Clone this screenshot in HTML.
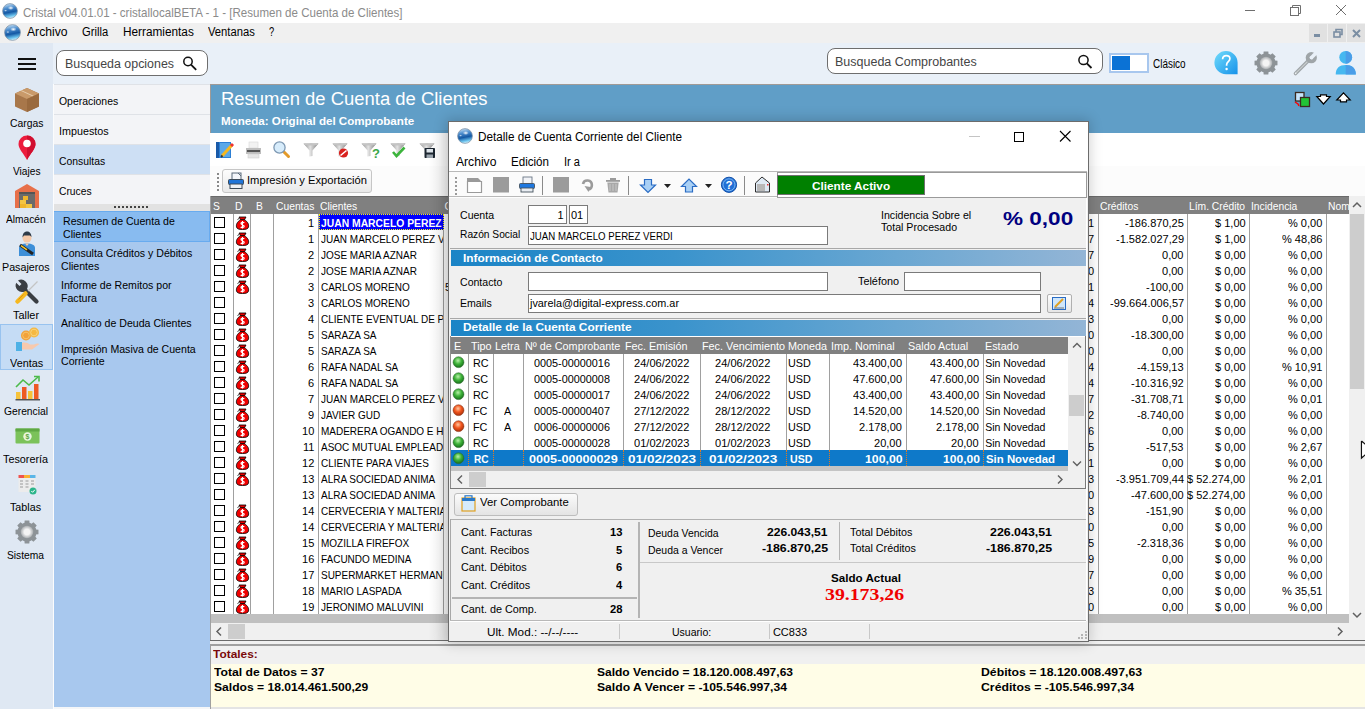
<!DOCTYPE html>
<html><head><meta charset="utf-8">
<style>
*{margin:0;padding:0;box-sizing:border-box}
html,body{width:1365px;height:709px;overflow:hidden;background:#fff;font-family:"Liberation Sans",sans-serif;font-size:12px;color:#000;position:relative}
.a{position:absolute}
.t{position:absolute;white-space:nowrap;line-height:1;transform-origin:0 0}
svg.a{overflow:visible}
</style></head><body>
<div class="a" style="left:0px;top:0px;width:1365px;height:23px;background:#fff;"></div>
<svg class="a" style="left:2px;top:3px;" width="16" height="16" viewBox="0 0 16 16"><defs><linearGradient id="g1" x1="0.3" y1="0" x2="0.5" y2="1"><stop offset="0" stop-color="#c9e3f7"/><stop offset="0.3" stop-color="#4f8fcf"/><stop offset="0.6" stop-color="#1458a4"/><stop offset="0.85" stop-color="#6cc4ee"/><stop offset="1" stop-color="#d8f4ff"/></linearGradient>
<radialGradient id="g1h" cx="0.5" cy="0.5" r="0.5"><stop offset="0" stop-color="#fff" stop-opacity="1"/><stop offset="1" stop-color="#fff" stop-opacity="0"/></radialGradient></defs>
<circle cx="8.0" cy="8.0" r="7.4" fill="url(#g1)" stroke="#7d8ea0" stroke-width="0.7"/>
<ellipse cx="8.8" cy="4.96" rx="3.04" ry="2.0" fill="url(#g1h)"/><ellipse cx="3.6" cy="7.6" rx="1.6" ry="1.2" fill="url(#g1h)" opacity="0.7"/></svg>
<div class="t" style="left:23.00px;top:6.00px;font-size:13px;color:#8b8b8b;transform:scaleX(0.8877);">Cristal v04.01.01 - cristallocalBETA - 1 - [Resumen de Cuenta de Clientes]</div>
<div class="a" style="left:1245px;top:10px;width:10px;height:1px;background:#6f6f6f;"></div>
<svg class="a" style="left:1289px;top:4px;" width="13" height="13" viewBox="0 0 13 13"><rect x="1.5" y="3.5" width="8" height="8" fill="none" stroke="#6f6f6f" stroke-width="1"/><path d="M3.5 3.5V1.5H11.5V9.5H9.5" fill="none" stroke="#6f6f6f" stroke-width="1"/></svg>
<svg class="a" style="left:1335px;top:4px;" width="12" height="12" viewBox="0 0 12 12"><path d="M1 1L11 11M11 1L1 11" stroke="#6f6f6f" stroke-width="1"/></svg>
<div class="a" style="left:0px;top:23px;width:1365px;height:20px;background:#f0f0f0;"></div>
<svg class="a" style="left:4px;top:24px;" width="17" height="17" viewBox="0 0 17 17"><defs><linearGradient id="g2" x1="0.3" y1="0" x2="0.5" y2="1"><stop offset="0" stop-color="#c9e3f7"/><stop offset="0.3" stop-color="#4f8fcf"/><stop offset="0.6" stop-color="#1458a4"/><stop offset="0.85" stop-color="#6cc4ee"/><stop offset="1" stop-color="#d8f4ff"/></linearGradient>
<radialGradient id="g2h" cx="0.5" cy="0.5" r="0.5"><stop offset="0" stop-color="#fff" stop-opacity="1"/><stop offset="1" stop-color="#fff" stop-opacity="0"/></radialGradient></defs>
<circle cx="8.5" cy="8.5" r="7.9" fill="url(#g2)" stroke="#7d8ea0" stroke-width="0.7"/>
<ellipse cx="9.350000000000001" cy="5.27" rx="3.23" ry="2.125" fill="url(#g2h)"/><ellipse cx="3.825" cy="8.075" rx="1.7000000000000002" ry="1.275" fill="url(#g2h)" opacity="0.7"/></svg>
<div class="t" style="left:27.00px;top:26.14px;font-size:12px;color:#000;transform:scaleX(1.0146);">Archivo</div>
<div class="t" style="left:82.20px;top:26.14px;font-size:12px;color:#000;transform:scaleX(0.9321);">Grilla</div>
<div class="t" style="left:123.00px;top:26.14px;font-size:12px;color:#000;transform:scaleX(0.9830);">Herramientas</div>
<div class="t" style="left:208.00px;top:26.14px;font-size:12px;color:#000;transform:scaleX(0.9352);">Ventanas</div>
<div class="t" style="left:268.60px;top:26.14px;font-size:12px;color:#000;transform:scaleX(0.7792);">?</div>
<div class="a" style="left:1309px;top:24px;width:18px;height:18px;background:#e1e1e1;"></div>
<div class="a" style="left:1328px;top:24px;width:18px;height:18px;background:#e1e1e1;"></div>
<div class="a" style="left:1347px;top:24px;width:18px;height:18px;background:#e1e1e1;"></div>
<div class="a" style="left:1314px;top:34px;width:6px;height:3px;background:#7b8ea3;"></div>
<svg class="a" style="left:1333px;top:28px;" width="10" height="10" viewBox="0 0 10 10"><rect x="1" y="4" width="6" height="5" fill="none" stroke="#7b8ea3" stroke-width="1.6"/><path d="M3 4V1.5H9V6.5H7" fill="none" stroke="#7b8ea3" stroke-width="1.6"/></svg>
<svg class="a" style="left:1352px;top:29px;" width="9" height="9" viewBox="0 0 9 9"><path d="M1 1L8 8M8 1L1 8" stroke="#7b8ea3" stroke-width="2"/></svg>
<div class="a" style="left:0px;top:43px;width:1365px;height:41px;background:#e9f0f8;"></div>
<div class="a" style="left:0px;top:43px;width:53px;height:666px;background:#dfe8f3;"></div>
<div class="a" style="left:18px;top:58px;width:18px;height:2px;background:#111;"></div>
<div class="a" style="left:18px;top:63px;width:18px;height:2px;background:#111;"></div>
<div class="a" style="left:18px;top:68px;width:18px;height:2px;background:#111;"></div>
<div class="a" style="left:56px;top:50px;width:152px;height:26px;background:#fff;border:1px solid #6e6e6e;border-radius:8px"></div>
<div class="t" style="left:64.50px;top:57.54px;font-size:12px;color:#454545;transform:scaleX(1.0340);">Busqueda opciones</div>
<svg class="a" style="left:182px;top:56px;" width="16" height="16" viewBox="0 0 16 16"><circle cx="6" cy="5.5" r="4.2" fill="none" stroke="#111" stroke-width="1.5"/><path d="M9 8.6L14.2 13.8" stroke="#111" stroke-width="1.8"/></svg>
<div class="a" style="left:827px;top:48px;width:276px;height:26px;background:#fff;border:1px solid #6e6e6e;border-radius:8px"></div>
<div class="t" style="left:835.30px;top:55.84px;font-size:12px;color:#454545;transform:scaleX(1.0412);">Busqueda Comprobantes</div>
<svg class="a" style="left:1077px;top:54px;" width="16" height="16" viewBox="0 0 16 16"><circle cx="6.5" cy="6" r="4.6" fill="none" stroke="#111" stroke-width="1.5"/><path d="M9.8 9.4L14.5 14" stroke="#111" stroke-width="1.8"/></svg>
<div class="a" style="left:1109px;top:53px;width:40px;height:20px;background:#fff;border:2px solid #a8c7ee"></div>
<div class="a" style="left:1112px;top:56px;width:18px;height:14px;background:#0b72d5;"></div>
<div class="t" style="left:1153.40px;top:58.34px;font-size:12px;color:#000;transform:scaleX(0.8286);">Clásico</div>
<svg class="a" style="left:1213px;top:50px;" width="26" height="26" viewBox="0 0 26 26"><defs><linearGradient id="hg" x1="0" y1="0" x2="1" y2="1"><stop offset="0" stop-color="#72dcfb"/><stop offset="1" stop-color="#1692ea"/></linearGradient></defs>
<path d="M13 1A11.6 11.6 0 0 0 1.4 12.6A11.6 11.6 0 0 0 13 24.2H24.6V12.6A11.6 11.6 0 0 0 13 1Z" fill="url(#hg)"/>
<path d="M9.6 9.2C9.6 6.8 11.2 5.6 13.3 5.6C15.4 5.6 16.9 7 16.9 8.8C16.9 11.6 13.6 11.8 13.6 14.8V15.8" fill="none" stroke="#fff" stroke-width="1.7"/><circle cx="13.6" cy="19" r="1.2" fill="#fff"/></svg>
<svg class="a" style="left:1254px;top:51px;" width="24" height="24" viewBox="0 0 24 24"><defs><radialGradient id="gg1254" cx="0.5" cy="0.5" r="0.5"><stop offset="0.45" stop-color="#f4f4f4"/><stop offset="1" stop-color="#a9adb0"/></radialGradient></defs>
<polygon points="21.00,9.41 23.47,9.68 23.47,14.32 21.00,14.59 20.19,16.53 21.75,18.46 18.46,21.75 16.53,20.19 14.59,21.00 14.32,23.47 9.68,23.47 9.41,21.00 7.47,20.19 5.54,21.75 2.25,18.46 3.81,16.53 3.00,14.59 0.53,14.32 0.53,9.68 3.00,9.41 3.81,7.47 2.25,5.54 5.54,2.25 7.47,3.81 9.41,3.00 9.68,0.53 14.32,0.53 14.59,3.00 16.53,3.81 18.46,2.25 21.75,5.54 20.19,7.47" fill="#8d9397"/><circle cx="12.0" cy="12.0" r="9.36" fill="#8d9397"/><circle cx="12.0" cy="12.0" r="6.24" fill="url(#gg1254)"/></svg>
<svg class="a" style="left:1291px;top:50px;" width="30" height="28" viewBox="0 0 30 28"><path d="M4.5 23.5L17.5 10.5" stroke="#9fa5a8" stroke-width="3.6" stroke-linecap="round"/><path d="M4.8 23.2L17.2 10.8" stroke="#c9cecf" stroke-width="1.2"/>
<circle cx="20.3" cy="7.7" r="5.6" fill="#9fa5a8"/><path d="M19.6 8.4L25.5 2.5" stroke="#e9f0f8" stroke-width="3.6"/><circle cx="20.3" cy="7.7" r="1.6" fill="#e9f0f8"/><circle cx="4.6" cy="23.4" r="0.8" fill="#eef2f6"/></svg>
<svg class="a" style="left:1333px;top:50px;" width="26" height="26" viewBox="0 0 26 26"><circle cx="12.7" cy="7.3" r="6.4" fill="#46b8f0"/><path d="M12.7 0.9A6.4 6.4 0 0 1 12.7 13.7Z" fill="#4a9de8"/><path d="M2.7 24.4C2.7 18 6.5 14.9 12.7 14.9C18.9 14.9 22.8 18 22.8 24.4Z" fill="#46b8f0"/><path d="M12.7 14.9C18.9 14.9 22.8 18 22.8 24.4H12.7Z" fill="#4a9de8"/></svg>
<div class="a" style="left:0;top:324px;width:53px;height:46px;background:#c5dcf5;border:1px solid #98c3ef"></div>
<div class="t" style="left:9.60px;top:118.19px;font-size:11px;color:#000;transform:scaleX(0.9420);">Cargas</div>
<div class="t" style="left:12.70px;top:165.89px;font-size:11px;color:#000;transform:scaleX(0.9240);">Viajes</div>
<div class="t" style="left:6.30px;top:213.99px;font-size:11px;color:#000;transform:scaleX(0.9277);">Almacén</div>
<div class="t" style="left:2.00px;top:261.69px;font-size:11px;color:#000;transform:scaleX(0.9752);">Pasajeros</div>
<div class="t" style="left:13.00px;top:310.29px;font-size:11px;color:#000;transform:scaleX(0.9892);">Taller</div>
<div class="t" style="left:10.20px;top:358.19px;font-size:11px;color:#000;transform:scaleX(0.9869);">Ventas</div>
<div class="t" style="left:4.20px;top:405.69px;font-size:11px;color:#000;transform:scaleX(0.9347);">Gerencial</div>
<div class="t" style="left:3.00px;top:453.69px;font-size:11px;color:#000;transform:scaleX(0.9815);">Tesorería</div>
<div class="t" style="left:10.00px;top:502.49px;font-size:11px;color:#000;transform:scaleX(0.9750);">Tablas</div>
<div class="t" style="left:7.40px;top:550.09px;font-size:11px;color:#000;transform:scaleX(0.9312);">Sistema</div>
<svg class="a" style="left:14px;top:87px;" width="26" height="26" viewBox="0 0 26 26"><path d="M13 1L25 6.5V19.5L13 25L1 19.5V6.5Z" fill="#a8774a"/>
<path d="M13 1L25 6.5L13 12L1 6.5Z" fill="#c99a6a"/><path d="M13 12L25 6.5V19.5L13 25Z" fill="#9a6a3e"/>
<path d="M6.5 3.8L18.5 9.3L19.5 8.8L7.5 3.3Z" fill="#e8cfae"/></svg>
<svg class="a" style="left:18px;top:135px;" width="18" height="26" viewBox="0 0 18 26"><path d="M9 0.5A8.5 8.5 0 0 1 17.5 9C17.5 14 12 19 9 25C6 19 0.5 14 0.5 9A8.5 8.5 0 0 1 9 0.5Z" fill="#ec1c3d"/><path d="M9 0.5A8.5 8.5 0 0 1 17.5 9C17.5 14 12 19 9 25Z" fill="#d10f2f"/><circle cx="9" cy="8.5" r="3.8" fill="#fff"/></svg>
<svg class="a" style="left:14px;top:183px;" width="26" height="26" viewBox="0 0 26 26"><path d="M1 8L13 1L25 8V25H1Z" fill="#e7704a"/><rect x="5" y="9" width="16" height="16" fill="#6b6b6b"/>
<rect x="5" y="9" width="16" height="2" fill="#555"/><rect x="6" y="17" width="6" height="4" fill="#f4c542"/><rect x="6" y="21" width="6" height="4" fill="#f0b52a"/><rect x="12" y="21" width="6" height="4" fill="#f4c542"/><rect x="9" y="13" width="5" height="4" fill="#f0b52a"/></svg>
<svg class="a" style="left:18px;top:231px;" width="18" height="26" viewBox="0 0 18 26"><circle cx="9" cy="7" r="4.5" fill="#f5c9a8"/><path d="M4.5 6.5C4.5 2 7 0.5 9 0.5C11.5 0.5 13.5 2.5 13.5 6L12 4.5H6Z" fill="#2e3b48"/>
<path d="M1 25V17C1 14 4 12.5 9 12.5C14 12.5 17 14 17 17V25Z" fill="#3d8fd8"/><path d="M7 12.5H11L9 15Z" fill="#f5c9a8"/>
<path d="M2 14L15 23" stroke="#222" stroke-width="3"/><path d="M3 14.7L9 18.8" stroke="#f7c52b" stroke-width="1.6"/></svg>
<svg class="a" style="left:14px;top:279px;" width="26" height="26" viewBox="0 0 26 26"><path d="M10 10L22.5 22.5" stroke="#3a3e43" stroke-width="4.2" stroke-linecap="round"/>
<path d="M2.2 3.8A6.5 6.5 0 0 0 10.5 12.5L13 10A6.5 6.5 0 0 0 4 1.5L7.5 5L5.5 7Z" fill="#3a3e43"/>
<path d="M14 12L23.5 2.5" stroke="#c4c4c4" stroke-width="1.3"/>
<path d="M3.5 22.5L11.5 14.5" stroke="#f6b81f" stroke-width="4.5" stroke-linecap="round"/><path d="M4.5 20.5L9.5 15.5" stroke="#d8920f" stroke-width="0.9"/></svg>
<svg class="a" style="left:15px;top:327px;" width="26" height="26" viewBox="0 0 26 26"><circle cx="11" cy="8.5" r="5" fill="#f2a23a"/><circle cx="11" cy="8.5" r="3.3" fill="none" stroke="#f6c26b" stroke-width="1"/>
<circle cx="19" cy="5.5" r="5" fill="#f5b942"/><circle cx="19" cy="5.5" r="3.3" fill="none" stroke="#f9d27a" stroke-width="1"/>
<rect x="1" y="15" width="6" height="9" fill="#4db1e6"/><path d="M7 16C10 15 13 16 15 17.5H19C21 16.5 23 16 24.5 17L17 22.5H7Z" fill="#f7c9ad"/></svg>
<svg class="a" style="left:15px;top:375px;" width="26" height="26" viewBox="0 0 26 26"><rect x="1" y="17" width="4.5" height="7" fill="#f6c23a"/><rect x="7" y="12" width="4.5" height="12" fill="#ee5a24"/>
<rect x="13" y="16" width="4.5" height="8" fill="#f6c23a"/><rect x="19" y="9" width="4.5" height="15" fill="#ee5a24"/>
<path d="M0.5 24.8H25" stroke="#333" stroke-width="1.2"/><path d="M1 12L8 5L14 10L23 2" fill="none" stroke="#4cbb4a" stroke-width="1.6"/><path d="M19 1.5H24V6.5" fill="none" stroke="#4cbb4a" stroke-width="1.6"/></svg>
<svg class="a" style="left:15px;top:427px;" width="25" height="18" viewBox="0 0 25 18"><rect x="0.5" y="1.5" width="24" height="15" rx="1" fill="#7bc25a"/><rect x="0.5" y="1.5" width="24" height="3" fill="#5fa844"/>
<ellipse cx="12.5" cy="9.5" rx="4.2" ry="4.2" fill="#e8f5df"/><text x="12.5" y="12.4" font-size="7" font-family="Liberation Sans" font-weight="bold" fill="#5fa844" text-anchor="middle">$</text></svg>
<svg class="a" style="left:18px;top:474px;" width="19" height="21" viewBox="0 0 19 21"><rect x="0.5" y="1" width="17" height="17" fill="#ececec"/><rect x="0.5" y="1" width="5.5" height="3" fill="#ef5350"/><rect x="6" y="1" width="6" height="3" fill="#f9b233"/><rect x="12" y="1" width="5.5" height="3" fill="#5ab6e8"/>
<path d="M2 7H5M2 10H5M2 13H5M7.5 7H10.5M7.5 10H10.5M7.5 13H10.5M13 7H16M13 10H16" stroke="#9a9a9a" stroke-width="1"/><circle cx="15" cy="17" r="3.5" fill="#2bb58a"/><path d="M13.3 17L14.6 18.3L16.8 15.8" fill="none" stroke="#fff" stroke-width="1"/></svg>
<svg class="a" style="left:15px;top:520px;" width="24" height="24" viewBox="0 0 24 24"><defs><radialGradient id="gg15" cx="0.5" cy="0.5" r="0.5"><stop offset="0.45" stop-color="#f4f4f4"/><stop offset="1" stop-color="#a9adb0"/></radialGradient></defs>
<polygon points="21.00,9.41 23.47,9.68 23.47,14.32 21.00,14.59 20.19,16.53 21.75,18.46 18.46,21.75 16.53,20.19 14.59,21.00 14.32,23.47 9.68,23.47 9.41,21.00 7.47,20.19 5.54,21.75 2.25,18.46 3.81,16.53 3.00,14.59 0.53,14.32 0.53,9.68 3.00,9.41 3.81,7.47 2.25,5.54 5.54,2.25 7.47,3.81 9.41,3.00 9.68,0.53 14.32,0.53 14.59,3.00 16.53,3.81 18.46,2.25 21.75,5.54 20.19,7.47" fill="#8d9397"/><circle cx="12.0" cy="12.0" r="9.36" fill="#8d9397"/><circle cx="12.0" cy="12.0" r="6.24" fill="url(#gg15)"/></svg>
<div class="a" style="left:53px;top:84px;width:157px;height:625px;background:#a8c8ee;"></div>
<div class="a" style="left:53px;top:84px;width:157px;height:120px;background:#f3f4f7;"></div>
<div class="a" style="left:53px;top:144px;width:157px;height:30px;background:#cddff4;"></div>
<div class="a" style="left:53px;top:84px;width:157px;height:1px;background:#dfe2e7;"></div>
<div class="a" style="left:53px;top:114px;width:157px;height:1px;background:#dfe2e7;"></div>
<div class="a" style="left:53px;top:144px;width:157px;height:1px;background:#dfe2e7;"></div>
<div class="a" style="left:53px;top:174px;width:157px;height:1px;background:#dfe2e7;"></div>
<div class="t" style="left:58.80px;top:96.19px;font-size:11px;color:#000;transform:scaleX(0.9492);">Operaciones</div>
<div class="t" style="left:58.80px;top:126.19px;font-size:11px;color:#000;transform:scaleX(0.9775);">Impuestos</div>
<div class="t" style="left:58.80px;top:156.19px;font-size:11px;color:#000;transform:scaleX(0.9425);">Consultas</div>
<div class="t" style="left:58.80px;top:186.09px;font-size:11px;color:#000;transform:scaleX(0.9357);">Cruces</div>
<div class="a" style="left:53px;top:204px;width:157px;height:7px;background:#e2e2e2;"></div>
<div class="a" style="left:114px;top:206px;width:2px;height:2px;background:#444;"></div>
<div class="a" style="left:118px;top:206px;width:2px;height:2px;background:#444;"></div>
<div class="a" style="left:122px;top:206px;width:2px;height:2px;background:#444;"></div>
<div class="a" style="left:126px;top:206px;width:2px;height:2px;background:#444;"></div>
<div class="a" style="left:130px;top:206px;width:2px;height:2px;background:#444;"></div>
<div class="a" style="left:134px;top:206px;width:2px;height:2px;background:#444;"></div>
<div class="a" style="left:138px;top:206px;width:2px;height:2px;background:#444;"></div>
<div class="a" style="left:142px;top:206px;width:2px;height:2px;background:#444;"></div>
<div class="a" style="left:146px;top:206px;width:2px;height:2px;background:#444;"></div>
<div class="a" style="left:53px;top:211px;width:157px;height:31px;background:#88bbf0;border:1px solid #68abef"></div>
<div class="t" style="left:62.50px;top:216.29px;font-size:11px;color:#000;transform:scaleX(0.9622);">Resumen de Cuenta de</div>
<div class="t" style="left:62.50px;top:228.89px;font-size:11px;color:#000;transform:scaleX(0.9622);">Clientes</div>
<div class="t" style="left:61.40px;top:248.29px;font-size:11px;color:#000;transform:scaleX(0.9622);">Consulta Créditos y Débitos</div>
<div class="t" style="left:61.40px;top:261.29px;font-size:11px;color:#000;transform:scaleX(0.9622);">Clientes</div>
<div class="t" style="left:61.40px;top:280.29px;font-size:11px;color:#000;transform:scaleX(0.9622);">Informe de Remitos por</div>
<div class="t" style="left:61.40px;top:292.89px;font-size:11px;color:#000;transform:scaleX(0.9622);">Factura</div>
<div class="t" style="left:61.40px;top:317.99px;font-size:11px;color:#000;transform:scaleX(0.9622);">Analítico de Deuda Clientes</div>
<div class="t" style="left:61.40px;top:344.09px;font-size:11px;color:#000;transform:scaleX(0.9622);">Impresión Masiva de Cuenta</div>
<div class="t" style="left:61.40px;top:356.29px;font-size:11px;color:#000;transform:scaleX(0.9622);">Corriente</div>
<div class="a" style="left:53px;top:707px;width:157px;height:2px;background:#f4f6f8;"></div>
<div class="a" style="left:53px;top:84px;width:1px;height:625px;background:#fbfcfd;"></div>
<div class="a" style="left:210px;top:84px;width:1155px;height:1px;background:#a09a96;"></div>
<div class="a" style="left:210px;top:85px;width:1155px;height:48px;background:#609ec7;"></div>
<div class="a" style="left:210px;top:84px;width:1px;height:49px;background:#a09a96;"></div>
<div class="t" style="left:220.60px;top:90.36px;font-size:18px;color:#fff;transform:scaleX(1.0244);">Resumen de Cuenta de Clientes</div>
<div class="t" style="left:220.60px;top:116.07px;font-size:11.5px;color:#fff;font-weight:bold;transform:scaleX(1.0079);">Moneda: Original del Comprobante</div>
<svg class="a" style="left:1294px;top:91px;" width="17" height="16" viewBox="0 0 17 16"><rect x="1.5" y="1.5" width="8.5" height="8.5" fill="#c6e4fb" stroke="#3a2a20" stroke-width="1.3"/><rect x="6.5" y="6.5" width="9" height="9" fill="#22c335" stroke="#3a2a20" stroke-width="1.3"/><path d="M1 11L4 13L5 15" stroke="#f00" stroke-width="1.5" fill="none"/></svg>
<svg class="a" style="left:1316px;top:94px;" width="15" height="11" viewBox="0 0 15 11"><path d="M0.8 2.5H4.5V0.8H10.5V2.5H14.2L7.5 10Z" fill="#fff" stroke="#000" stroke-width="1.2"/></svg>
<svg class="a" style="left:1336px;top:92px;" width="15" height="11" viewBox="0 0 15 11"><path d="M0.8 8H4.5V9.8H10.5V8H14.2L7.5 0.8Z" fill="#fff" stroke="#000" stroke-width="1.2"/></svg>
<div class="a" style="left:210px;top:133px;width:1155px;height:63px;background:#fff;"></div>
<div class="a" style="left:210px;top:166px;width:1155px;height:30px;background:#fcfcfc;"></div>
<svg class="a" style="left:210px;top:133px;" width="230" height="30" viewBox="0 0 230 30"><defs><linearGradient id="fg" x1="0" x2="1"><stop offset="0" stop-color="#8c8c8c"/><stop offset="0.45" stop-color="#e2e2e2"/><stop offset="1" stop-color="#7c7c7c"/></linearGradient></defs><rect x="6" y="9" width="15" height="16" fill="#2c7fd4"/><rect x="6" y="9" width="3" height="16" fill="#1a5aa8"/><rect x="10" y="10" width="10" height="14" fill="#5aa8e8"/><path d="M12 23L22 12" stroke="#f6b81f" stroke-width="3"/><path d="M21 13L23 11" stroke="#e33" stroke-width="3"/><path d="M11 24L12.5 22.5" stroke="#333" stroke-width="2"/><g transform="translate(36,9)"><rect x="3" y="0" width="9" height="6" fill="#f2f2f2" stroke="#d8d8d8" stroke-width="0.6"/><rect x="0" y="6" width="15" height="6" fill="#bdbdbd"/><rect x="1" y="8" width="13" height="2" fill="#555"/><rect x="2" y="12" width="11" height="4" fill="#e6e6e6" stroke="#d0d0d0" stroke-width="0.6"/></g><g transform="translate(63,8)"><path d="M10 10L15.5 15.5" stroke="#e39a2a" stroke-width="3" stroke-linecap="round"/><circle cx="6.5" cy="6.5" r="5.6" fill="#d7ecfb" stroke="#7d98b3" stroke-width="1.3"/></g><g transform="translate(93,10)"><path d="M0.5 0.5H15.5L9.5 7.5V13L6.5 13.5V7.5Z" fill="url(#fg)"/><ellipse cx="8" cy="1.3" rx="7.3" ry="1.2" fill="#c4c4c4"/></g><g transform="translate(122,10)"><path d="M0.5 0.5H15.5L9.5 7.5V13L6.5 13.5V7.5Z" fill="url(#fg)"/><ellipse cx="8" cy="1.3" rx="7.3" ry="1.2" fill="#c4c4c4"/></g><g transform="translate(151,10)"><path d="M0.5 0.5H15.5L9.5 7.5V13L6.5 13.5V7.5Z" fill="url(#fg)"/><ellipse cx="8" cy="1.3" rx="7.3" ry="1.2" fill="#c4c4c4"/></g><g transform="translate(180,10)"><path d="M0.5 0.5H15.5L9.5 7.5V13L6.5 13.5V7.5Z" fill="url(#fg)"/><ellipse cx="8" cy="1.3" rx="7.3" ry="1.2" fill="#c4c4c4"/></g><g transform="translate(209,10)"><path d="M0.5 0.5H15.5L9.5 7.5V13L6.5 13.5V7.5Z" fill="url(#fg)"/><ellipse cx="8" cy="1.3" rx="7.3" ry="1.2" fill="#c4c4c4"/></g><circle cx="133.5" cy="20" r="4.6" fill="#d9211e"/><path d="M130.5 22.5L136.5 17.5" stroke="#fff" stroke-width="1.6"/><text x="162" y="25" font-family="Liberation Sans" font-weight="bold" font-size="13" fill="#3aa648">?</text><path d="M183 19L186.5 23L194.5 14.5" fill="none" stroke="#3cb43c" stroke-width="2.6"/><rect x="214.5" y="15" width="10.5" height="10" rx="0.8" fill="#1c2630"/><rect x="216.5" y="16" width="6.5" height="3.5" fill="#dfe6ec"/><rect x="216.5" y="21.5" width="6.5" height="3.5" fill="#9aa4ad"/></svg>
<div class="a" style="left:217px;top:173px;width:2px;height:2px;background:#8a8a8a;"></div>
<div class="a" style="left:217px;top:177px;width:2px;height:2px;background:#8a8a8a;"></div>
<div class="a" style="left:217px;top:181px;width:2px;height:2px;background:#8a8a8a;"></div>
<div class="a" style="left:217px;top:185px;width:2px;height:2px;background:#8a8a8a;"></div>
<div class="a" style="left:217px;top:189px;width:2px;height:2px;background:#8a8a8a;"></div>
<div class="a" style="left:222px;top:169px;width:150px;height:24px;border:1px solid #c6c6c6;border-radius:3px;background:linear-gradient(#fdfdfd,#e9e9e9)"></div>
<svg class="a" style="left:227px;top:172px;" width="18" height="18" viewBox="0 0 18 18"><rect x="5" y="1" width="9" height="7" fill="#f4f6fa" stroke="#5b6a7a" stroke-width="1"/><path d="M11 1L14 4" stroke="#5b6a7a"/><rect x="1.5" y="7.5" width="15" height="5" rx="1" fill="#1f74d8" stroke="#3c4a58"/><rect x="3" y="12" width="12" height="4.5" fill="#eef1f5" stroke="#3c4a58"/></svg>
<div class="t" style="left:247.00px;top:175.09px;font-size:11px;color:#000;transform:scaleX(1.0170);">Impresión y Exportación</div>
<div class="a" style="left:210px;top:196px;width:1155px;height:444px;background:#fff;"></div>
<div class="a" style="left:210px;top:196px;width:1139px;height:18px;background:#808080;"></div>
<div class="a" style="left:210px;top:196px;width:1139px;height:1px;background:#6a6a6a;"></div>
<div class="t" style="left:212.60px;top:201.11px;font-size:10.5px;color:#fff;transform:scaleX(0.9800);">S</div>
<div class="t" style="left:235.30px;top:201.11px;font-size:10.5px;color:#fff;transform:scaleX(0.9800);">D</div>
<div class="t" style="left:255.50px;top:201.11px;font-size:10.5px;color:#fff;transform:scaleX(0.9800);">B</div>
<div class="t" style="left:276.00px;top:201.11px;font-size:10.5px;color:#fff;transform:scaleX(0.9800);">Cuentas</div>
<div class="t" style="left:320.40px;top:201.11px;font-size:10.5px;color:#fff;transform:scaleX(0.9800);">Clientes</div>
<div class="t" style="left:1100.00px;top:201.11px;font-size:10.5px;color:#fff;transform:scaleX(0.9800);">Créditos</div>
<div class="t" style="left:1189.30px;top:201.11px;font-size:10.5px;color:#fff;transform:scaleX(0.9800);">Lím. Crédito</div>
<div class="t" style="left:1251.00px;top:201.11px;font-size:10.5px;color:#fff;transform:scaleX(0.9800);">Incidencia</div>
<div class="t" style="left:1328.00px;top:201.11px;font-size:10.5px;color:#fff;transform:scaleX(0.9800);">Nom</div>
<div class="a" style="left:233px;top:214px;width:1px;height:400px;background:#a0a0a0;"></div>
<div class="a" style="left:250px;top:214px;width:1px;height:400px;background:#a0a0a0;"></div>
<div class="a" style="left:273px;top:214px;width:1px;height:400px;background:#a0a0a0;"></div>
<div class="a" style="left:318px;top:214px;width:1px;height:400px;background:#a0a0a0;"></div>
<div class="a" style="left:443px;top:214px;width:1px;height:400px;background:#a0a0a0;"></div>
<div class="a" style="left:1098px;top:214px;width:1px;height:400px;background:#a0a0a0;"></div>
<div class="a" style="left:1187px;top:214px;width:1px;height:400px;background:#a0a0a0;"></div>
<div class="a" style="left:1249px;top:214px;width:1px;height:400px;background:#a0a0a0;"></div>
<div class="a" style="left:1326px;top:214px;width:1px;height:400px;background:#a0a0a0;"></div>
<div class="a" style="left:214px;top:217px;width:11px;height:11px;border:1.5px solid #000;background:#fff"></div>
<div class="t" style="left:308.37px;top:217.51px;font-size:10.5px;color:#000;transform:scaleX(1.0500);">1</div>
<div class="a" style="left:319px;top:214px;width:125px;height:16px;background:#0000ff;"></div>
<div class="a" style="left:319px;top:214px;width:125px;height:16px;border:1px dotted #ff0"></div>
<div class="a" style="left:320.9px;top:217.51px;width:122px;overflow:hidden;white-space:nowrap;line-height:1;font-size:10.5px;font-weight:bold;color:#fff"><span style="display:inline-block;transform:scaleX(0.985);transform-origin:0 0">JUAN MARCELO PEREZ</span></div>
<div class="t" style="left:1087.87px;top:217.51px;font-size:10.5px;color:#000;transform:scaleX(1.0500);">1</div>
<div class="t" style="left:1124.95px;top:217.51px;font-size:10.5px;color:#000;transform:scaleX(1.0500);">-186.870,25</div>
<div class="t" style="left:1214.75px;top:217.51px;font-size:10.5px;color:#000;transform:scaleX(1.0500);">$ 1,00</div>
<div class="t" style="left:1288.18px;top:217.51px;font-size:10.5px;color:#000;transform:scaleX(1.0500);">% 0,00</div>
<div class="a" style="left:214px;top:233px;width:11px;height:11px;border:1.5px solid #000;background:#fff"></div>
<div class="t" style="left:308.37px;top:233.51px;font-size:10.5px;color:#000;transform:scaleX(1.0500);">1</div>
<div class="a" style="left:320.9px;top:233.51px;width:122px;overflow:hidden;white-space:nowrap;line-height:1;font-size:10.5px;color:#000"><span style="display:inline-block;transform:scaleX(0.95);transform-origin:0 0">JUAN MARCELO PEREZ VERDI</span></div>
<div class="t" style="left:1087.87px;top:233.51px;font-size:10.5px;color:#000;transform:scaleX(1.0500);">7</div>
<div class="t" style="left:1115.76px;top:233.51px;font-size:10.5px;color:#000;transform:scaleX(1.0500);">-1.582.027,29</div>
<div class="t" style="left:1214.75px;top:233.51px;font-size:10.5px;color:#000;transform:scaleX(1.0500);">$ 1,00</div>
<div class="t" style="left:1282.05px;top:233.51px;font-size:10.5px;color:#000;transform:scaleX(1.0500);">% 48,86</div>
<div class="a" style="left:214px;top:249px;width:11px;height:11px;border:1.5px solid #000;background:#fff"></div>
<div class="t" style="left:308.37px;top:249.51px;font-size:10.5px;color:#000;transform:scaleX(1.0500);">2</div>
<div class="a" style="left:320.9px;top:249.51px;width:122px;overflow:hidden;white-space:nowrap;line-height:1;font-size:10.5px;color:#000"><span style="display:inline-block;transform:scaleX(0.95);transform-origin:0 0">JOSE MARIA AZNAR</span></div>
<div class="t" style="left:1087.87px;top:249.51px;font-size:10.5px;color:#000;transform:scaleX(1.0500);">7</div>
<div class="t" style="left:1162.34px;top:249.51px;font-size:10.5px;color:#000;transform:scaleX(1.0500);">0,00</div>
<div class="t" style="left:1214.75px;top:249.51px;font-size:10.5px;color:#000;transform:scaleX(1.0500);">$ 0,00</div>
<div class="t" style="left:1288.18px;top:249.51px;font-size:10.5px;color:#000;transform:scaleX(1.0500);">% 0,00</div>
<div class="a" style="left:214px;top:265px;width:11px;height:11px;border:1.5px solid #000;background:#fff"></div>
<div class="t" style="left:308.37px;top:265.51px;font-size:10.5px;color:#000;transform:scaleX(1.0500);">2</div>
<div class="a" style="left:320.9px;top:265.51px;width:122px;overflow:hidden;white-space:nowrap;line-height:1;font-size:10.5px;color:#000"><span style="display:inline-block;transform:scaleX(0.95);transform-origin:0 0">JOSE MARIA AZNAR</span></div>
<div class="t" style="left:1087.87px;top:265.51px;font-size:10.5px;color:#000;transform:scaleX(1.0500);">0</div>
<div class="t" style="left:1162.34px;top:265.51px;font-size:10.5px;color:#000;transform:scaleX(1.0500);">0,00</div>
<div class="t" style="left:1214.75px;top:265.51px;font-size:10.5px;color:#000;transform:scaleX(1.0500);">$ 0,00</div>
<div class="t" style="left:1288.18px;top:265.51px;font-size:10.5px;color:#000;transform:scaleX(1.0500);">% 0,00</div>
<div class="a" style="left:214px;top:281px;width:11px;height:11px;border:1.5px solid #000;background:#fff"></div>
<div class="t" style="left:308.37px;top:281.51px;font-size:10.5px;color:#000;transform:scaleX(1.0500);">3</div>
<div class="a" style="left:320.9px;top:281.51px;width:122px;overflow:hidden;white-space:nowrap;line-height:1;font-size:10.5px;color:#000"><span style="display:inline-block;transform:scaleX(0.95);transform-origin:0 0">CARLOS MORENO</span></div>
<div class="t" style="left:1087.87px;top:281.51px;font-size:10.5px;color:#000;transform:scaleX(1.0500);">1</div>
<div class="t" style="left:1146.41px;top:281.51px;font-size:10.5px;color:#000;transform:scaleX(1.0500);">-100,00</div>
<div class="t" style="left:1214.75px;top:281.51px;font-size:10.5px;color:#000;transform:scaleX(1.0500);">$ 0,00</div>
<div class="t" style="left:1288.18px;top:281.51px;font-size:10.5px;color:#000;transform:scaleX(1.0500);">% 0,00</div>
<div class="a" style="left:214px;top:297px;width:11px;height:11px;border:1.5px solid #000;background:#fff"></div>
<div class="t" style="left:308.37px;top:297.51px;font-size:10.5px;color:#000;transform:scaleX(1.0500);">3</div>
<div class="a" style="left:320.9px;top:297.51px;width:122px;overflow:hidden;white-space:nowrap;line-height:1;font-size:10.5px;color:#000"><span style="display:inline-block;transform:scaleX(0.95);transform-origin:0 0">CARLOS MORENO</span></div>
<div class="t" style="left:1087.87px;top:297.51px;font-size:10.5px;color:#000;transform:scaleX(1.0500);">4</div>
<div class="t" style="left:1109.63px;top:297.51px;font-size:10.5px;color:#000;transform:scaleX(1.0500);">-99.664.006,57</div>
<div class="t" style="left:1214.75px;top:297.51px;font-size:10.5px;color:#000;transform:scaleX(1.0500);">$ 0,00</div>
<div class="t" style="left:1288.18px;top:297.51px;font-size:10.5px;color:#000;transform:scaleX(1.0500);">% 0,00</div>
<div class="a" style="left:214px;top:313px;width:11px;height:11px;border:1.5px solid #000;background:#fff"></div>
<div class="t" style="left:308.37px;top:313.51px;font-size:10.5px;color:#000;transform:scaleX(1.0500);">4</div>
<div class="a" style="left:320.9px;top:313.51px;width:122px;overflow:hidden;white-space:nowrap;line-height:1;font-size:10.5px;color:#000"><span style="display:inline-block;transform:scaleX(0.95);transform-origin:0 0">CLIENTE EVENTUAL DE PRUEBA</span></div>
<div class="t" style="left:1087.87px;top:313.51px;font-size:10.5px;color:#000;transform:scaleX(1.0500);">3</div>
<div class="t" style="left:1162.34px;top:313.51px;font-size:10.5px;color:#000;transform:scaleX(1.0500);">0,00</div>
<div class="t" style="left:1214.75px;top:313.51px;font-size:10.5px;color:#000;transform:scaleX(1.0500);">$ 0,00</div>
<div class="t" style="left:1288.18px;top:313.51px;font-size:10.5px;color:#000;transform:scaleX(1.0500);">% 0,00</div>
<div class="a" style="left:214px;top:329px;width:11px;height:11px;border:1.5px solid #000;background:#fff"></div>
<div class="t" style="left:308.37px;top:329.51px;font-size:10.5px;color:#000;transform:scaleX(1.0500);">5</div>
<div class="a" style="left:320.9px;top:329.51px;width:122px;overflow:hidden;white-space:nowrap;line-height:1;font-size:10.5px;color:#000"><span style="display:inline-block;transform:scaleX(0.95);transform-origin:0 0">SARAZA SA</span></div>
<div class="t" style="left:1087.87px;top:329.51px;font-size:10.5px;color:#000;transform:scaleX(1.0500);">0</div>
<div class="t" style="left:1131.09px;top:329.51px;font-size:10.5px;color:#000;transform:scaleX(1.0500);">-18.300,00</div>
<div class="t" style="left:1214.75px;top:329.51px;font-size:10.5px;color:#000;transform:scaleX(1.0500);">$ 0,00</div>
<div class="t" style="left:1288.18px;top:329.51px;font-size:10.5px;color:#000;transform:scaleX(1.0500);">% 0,00</div>
<div class="a" style="left:214px;top:345px;width:11px;height:11px;border:1.5px solid #000;background:#fff"></div>
<div class="t" style="left:308.37px;top:345.51px;font-size:10.5px;color:#000;transform:scaleX(1.0500);">5</div>
<div class="a" style="left:320.9px;top:345.51px;width:122px;overflow:hidden;white-space:nowrap;line-height:1;font-size:10.5px;color:#000"><span style="display:inline-block;transform:scaleX(0.95);transform-origin:0 0">SARAZA SA</span></div>
<div class="t" style="left:1087.87px;top:345.51px;font-size:10.5px;color:#000;transform:scaleX(1.0500);">0</div>
<div class="t" style="left:1162.34px;top:345.51px;font-size:10.5px;color:#000;transform:scaleX(1.0500);">0,00</div>
<div class="t" style="left:1214.75px;top:345.51px;font-size:10.5px;color:#000;transform:scaleX(1.0500);">$ 0,00</div>
<div class="t" style="left:1288.18px;top:345.51px;font-size:10.5px;color:#000;transform:scaleX(1.0500);">% 0,00</div>
<div class="a" style="left:214px;top:361px;width:11px;height:11px;border:1.5px solid #000;background:#fff"></div>
<div class="t" style="left:308.37px;top:361.51px;font-size:10.5px;color:#000;transform:scaleX(1.0500);">6</div>
<div class="a" style="left:320.9px;top:361.51px;width:122px;overflow:hidden;white-space:nowrap;line-height:1;font-size:10.5px;color:#000"><span style="display:inline-block;transform:scaleX(0.95);transform-origin:0 0">RAFA NADAL SA</span></div>
<div class="t" style="left:1087.87px;top:361.51px;font-size:10.5px;color:#000;transform:scaleX(1.0500);">4</div>
<div class="t" style="left:1137.22px;top:361.51px;font-size:10.5px;color:#000;transform:scaleX(1.0500);">-4.159,13</div>
<div class="t" style="left:1214.75px;top:361.51px;font-size:10.5px;color:#000;transform:scaleX(1.0500);">$ 0,00</div>
<div class="t" style="left:1282.05px;top:361.51px;font-size:10.5px;color:#000;transform:scaleX(1.0500);">% 10,91</div>
<div class="a" style="left:214px;top:377px;width:11px;height:11px;border:1.5px solid #000;background:#fff"></div>
<div class="t" style="left:308.37px;top:377.51px;font-size:10.5px;color:#000;transform:scaleX(1.0500);">6</div>
<div class="a" style="left:320.9px;top:377.51px;width:122px;overflow:hidden;white-space:nowrap;line-height:1;font-size:10.5px;color:#000"><span style="display:inline-block;transform:scaleX(0.95);transform-origin:0 0">RAFA NADAL SA</span></div>
<div class="t" style="left:1087.87px;top:377.51px;font-size:10.5px;color:#000;transform:scaleX(1.0500);">4</div>
<div class="t" style="left:1131.09px;top:377.51px;font-size:10.5px;color:#000;transform:scaleX(1.0500);">-10.316,92</div>
<div class="t" style="left:1214.75px;top:377.51px;font-size:10.5px;color:#000;transform:scaleX(1.0500);">$ 0,00</div>
<div class="t" style="left:1288.18px;top:377.51px;font-size:10.5px;color:#000;transform:scaleX(1.0500);">% 0,00</div>
<div class="a" style="left:214px;top:393px;width:11px;height:11px;border:1.5px solid #000;background:#fff"></div>
<div class="t" style="left:308.37px;top:393.51px;font-size:10.5px;color:#000;transform:scaleX(1.0500);">7</div>
<div class="a" style="left:320.9px;top:393.51px;width:122px;overflow:hidden;white-space:nowrap;line-height:1;font-size:10.5px;color:#000"><span style="display:inline-block;transform:scaleX(0.95);transform-origin:0 0">JUAN MARCELO PEREZ VERDI</span></div>
<div class="t" style="left:1087.87px;top:393.51px;font-size:10.5px;color:#000;transform:scaleX(1.0500);">7</div>
<div class="t" style="left:1131.09px;top:393.51px;font-size:10.5px;color:#000;transform:scaleX(1.0500);">-31.708,71</div>
<div class="t" style="left:1214.75px;top:393.51px;font-size:10.5px;color:#000;transform:scaleX(1.0500);">$ 0,00</div>
<div class="t" style="left:1288.18px;top:393.51px;font-size:10.5px;color:#000;transform:scaleX(1.0500);">% 0,01</div>
<div class="a" style="left:214px;top:409px;width:11px;height:11px;border:1.5px solid #000;background:#fff"></div>
<div class="t" style="left:308.37px;top:409.51px;font-size:10.5px;color:#000;transform:scaleX(1.0500);">9</div>
<div class="a" style="left:320.9px;top:409.51px;width:122px;overflow:hidden;white-space:nowrap;line-height:1;font-size:10.5px;color:#000"><span style="display:inline-block;transform:scaleX(0.95);transform-origin:0 0">JAVIER GUD</span></div>
<div class="t" style="left:1087.87px;top:409.51px;font-size:10.5px;color:#000;transform:scaleX(1.0500);">2</div>
<div class="t" style="left:1137.22px;top:409.51px;font-size:10.5px;color:#000;transform:scaleX(1.0500);">-8.740,00</div>
<div class="t" style="left:1214.75px;top:409.51px;font-size:10.5px;color:#000;transform:scaleX(1.0500);">$ 0,00</div>
<div class="t" style="left:1288.18px;top:409.51px;font-size:10.5px;color:#000;transform:scaleX(1.0500);">% 0,00</div>
<div class="a" style="left:214px;top:425px;width:11px;height:11px;border:1.5px solid #000;background:#fff"></div>
<div class="t" style="left:302.24px;top:425.51px;font-size:10.5px;color:#000;transform:scaleX(1.0500);">10</div>
<div class="a" style="left:320.9px;top:425.51px;width:122px;overflow:hidden;white-space:nowrap;line-height:1;font-size:10.5px;color:#000"><span style="display:inline-block;transform:scaleX(0.95);transform-origin:0 0">MADERERA OGANDO E HIJOS</span></div>
<div class="t" style="left:1087.87px;top:425.51px;font-size:10.5px;color:#000;transform:scaleX(1.0500);">6</div>
<div class="t" style="left:1162.34px;top:425.51px;font-size:10.5px;color:#000;transform:scaleX(1.0500);">0,00</div>
<div class="t" style="left:1214.75px;top:425.51px;font-size:10.5px;color:#000;transform:scaleX(1.0500);">$ 0,00</div>
<div class="t" style="left:1288.18px;top:425.51px;font-size:10.5px;color:#000;transform:scaleX(1.0500);">% 0,00</div>
<div class="a" style="left:214px;top:441px;width:11px;height:11px;border:1.5px solid #000;background:#fff"></div>
<div class="t" style="left:303.06px;top:441.51px;font-size:10.5px;color:#000;transform:scaleX(1.0500);">11</div>
<div class="a" style="left:320.9px;top:441.51px;width:122px;overflow:hidden;white-space:nowrap;line-height:1;font-size:10.5px;color:#000"><span style="display:inline-block;transform:scaleX(0.95);transform-origin:0 0">ASOC MUTUAL EMPLEADOS</span></div>
<div class="t" style="left:1087.87px;top:441.51px;font-size:10.5px;color:#000;transform:scaleX(1.0500);">5</div>
<div class="t" style="left:1146.41px;top:441.51px;font-size:10.5px;color:#000;transform:scaleX(1.0500);">-517,53</div>
<div class="t" style="left:1214.75px;top:441.51px;font-size:10.5px;color:#000;transform:scaleX(1.0500);">$ 0,00</div>
<div class="t" style="left:1288.18px;top:441.51px;font-size:10.5px;color:#000;transform:scaleX(1.0500);">% 2,67</div>
<div class="a" style="left:214px;top:457px;width:11px;height:11px;border:1.5px solid #000;background:#fff"></div>
<div class="t" style="left:302.24px;top:457.51px;font-size:10.5px;color:#000;transform:scaleX(1.0500);">12</div>
<div class="a" style="left:320.9px;top:457.51px;width:122px;overflow:hidden;white-space:nowrap;line-height:1;font-size:10.5px;color:#000"><span style="display:inline-block;transform:scaleX(0.95);transform-origin:0 0">CLIENTE PARA VIAJES</span></div>
<div class="t" style="left:1087.87px;top:457.51px;font-size:10.5px;color:#000;transform:scaleX(1.0500);">1</div>
<div class="t" style="left:1162.34px;top:457.51px;font-size:10.5px;color:#000;transform:scaleX(1.0500);">0,00</div>
<div class="t" style="left:1214.75px;top:457.51px;font-size:10.5px;color:#000;transform:scaleX(1.0500);">$ 0,00</div>
<div class="t" style="left:1288.18px;top:457.51px;font-size:10.5px;color:#000;transform:scaleX(1.0500);">% 0,00</div>
<div class="a" style="left:214px;top:473px;width:11px;height:11px;border:1.5px solid #000;background:#fff"></div>
<div class="t" style="left:302.24px;top:473.51px;font-size:10.5px;color:#000;transform:scaleX(1.0500);">13</div>
<div class="a" style="left:320.9px;top:473.51px;width:122px;overflow:hidden;white-space:nowrap;line-height:1;font-size:10.5px;color:#000"><span style="display:inline-block;transform:scaleX(0.95);transform-origin:0 0">ALRA SOCIEDAD ANIMA</span></div>
<div class="t" style="left:1087.87px;top:473.51px;font-size:10.5px;color:#000;transform:scaleX(1.0500);">3</div>
<div class="t" style="left:1115.76px;top:473.51px;font-size:10.5px;color:#000;transform:scaleX(1.0500);">-3.951.709,44</div>
<div class="t" style="left:1187.16px;top:473.51px;font-size:10.5px;color:#000;transform:scaleX(1.0500);">$ 52.274,00</div>
<div class="t" style="left:1288.18px;top:473.51px;font-size:10.5px;color:#000;transform:scaleX(1.0500);">% 2,01</div>
<div class="a" style="left:214px;top:489px;width:11px;height:11px;border:1.5px solid #000;background:#fff"></div>
<div class="t" style="left:302.24px;top:489.51px;font-size:10.5px;color:#000;transform:scaleX(1.0500);">13</div>
<div class="a" style="left:320.9px;top:489.51px;width:122px;overflow:hidden;white-space:nowrap;line-height:1;font-size:10.5px;color:#000"><span style="display:inline-block;transform:scaleX(0.95);transform-origin:0 0">ALRA SOCIEDAD ANIMA</span></div>
<div class="t" style="left:1087.87px;top:489.51px;font-size:10.5px;color:#000;transform:scaleX(1.0500);">0</div>
<div class="t" style="left:1131.09px;top:489.51px;font-size:10.5px;color:#000;transform:scaleX(1.0500);">-47.600,00</div>
<div class="t" style="left:1187.16px;top:489.51px;font-size:10.5px;color:#000;transform:scaleX(1.0500);">$ 52.274,00</div>
<div class="t" style="left:1288.18px;top:489.51px;font-size:10.5px;color:#000;transform:scaleX(1.0500);">% 0,00</div>
<div class="a" style="left:214px;top:505px;width:11px;height:11px;border:1.5px solid #000;background:#fff"></div>
<div class="t" style="left:302.24px;top:505.51px;font-size:10.5px;color:#000;transform:scaleX(1.0500);">14</div>
<div class="a" style="left:320.9px;top:505.51px;width:122px;overflow:hidden;white-space:nowrap;line-height:1;font-size:10.5px;color:#000"><span style="display:inline-block;transform:scaleX(0.95);transform-origin:0 0">CERVECERIA Y MALTERIA</span></div>
<div class="t" style="left:1087.87px;top:505.51px;font-size:10.5px;color:#000;transform:scaleX(1.0500);">3</div>
<div class="t" style="left:1146.41px;top:505.51px;font-size:10.5px;color:#000;transform:scaleX(1.0500);">-151,90</div>
<div class="t" style="left:1214.75px;top:505.51px;font-size:10.5px;color:#000;transform:scaleX(1.0500);">$ 0,00</div>
<div class="t" style="left:1288.18px;top:505.51px;font-size:10.5px;color:#000;transform:scaleX(1.0500);">% 0,00</div>
<div class="a" style="left:214px;top:521px;width:11px;height:11px;border:1.5px solid #000;background:#fff"></div>
<div class="t" style="left:302.24px;top:521.51px;font-size:10.5px;color:#000;transform:scaleX(1.0500);">14</div>
<div class="a" style="left:320.9px;top:521.51px;width:122px;overflow:hidden;white-space:nowrap;line-height:1;font-size:10.5px;color:#000"><span style="display:inline-block;transform:scaleX(0.95);transform-origin:0 0">CERVECERIA Y MALTERIA</span></div>
<div class="t" style="left:1087.87px;top:521.51px;font-size:10.5px;color:#000;transform:scaleX(1.0500);">0</div>
<div class="t" style="left:1162.34px;top:521.51px;font-size:10.5px;color:#000;transform:scaleX(1.0500);">0,00</div>
<div class="t" style="left:1214.75px;top:521.51px;font-size:10.5px;color:#000;transform:scaleX(1.0500);">$ 0,00</div>
<div class="t" style="left:1288.18px;top:521.51px;font-size:10.5px;color:#000;transform:scaleX(1.0500);">% 0,00</div>
<div class="a" style="left:214px;top:537px;width:11px;height:11px;border:1.5px solid #000;background:#fff"></div>
<div class="t" style="left:302.24px;top:537.51px;font-size:10.5px;color:#000;transform:scaleX(1.0500);">15</div>
<div class="a" style="left:320.9px;top:537.51px;width:122px;overflow:hidden;white-space:nowrap;line-height:1;font-size:10.5px;color:#000"><span style="display:inline-block;transform:scaleX(0.95);transform-origin:0 0">MOZILLA FIREFOX</span></div>
<div class="t" style="left:1087.87px;top:537.51px;font-size:10.5px;color:#000;transform:scaleX(1.0500);">5</div>
<div class="t" style="left:1137.22px;top:537.51px;font-size:10.5px;color:#000;transform:scaleX(1.0500);">-2.318,36</div>
<div class="t" style="left:1214.75px;top:537.51px;font-size:10.5px;color:#000;transform:scaleX(1.0500);">$ 0,00</div>
<div class="t" style="left:1288.18px;top:537.51px;font-size:10.5px;color:#000;transform:scaleX(1.0500);">% 0,00</div>
<div class="a" style="left:214px;top:553px;width:11px;height:11px;border:1.5px solid #000;background:#fff"></div>
<div class="t" style="left:302.24px;top:553.51px;font-size:10.5px;color:#000;transform:scaleX(1.0500);">16</div>
<div class="a" style="left:320.9px;top:553.51px;width:122px;overflow:hidden;white-space:nowrap;line-height:1;font-size:10.5px;color:#000"><span style="display:inline-block;transform:scaleX(0.95);transform-origin:0 0">FACUNDO MEDINA</span></div>
<div class="t" style="left:1087.87px;top:553.51px;font-size:10.5px;color:#000;transform:scaleX(1.0500);">9</div>
<div class="t" style="left:1162.34px;top:553.51px;font-size:10.5px;color:#000;transform:scaleX(1.0500);">0,00</div>
<div class="t" style="left:1214.75px;top:553.51px;font-size:10.5px;color:#000;transform:scaleX(1.0500);">$ 0,00</div>
<div class="t" style="left:1288.18px;top:553.51px;font-size:10.5px;color:#000;transform:scaleX(1.0500);">% 0,00</div>
<div class="a" style="left:214px;top:569px;width:11px;height:11px;border:1.5px solid #000;background:#fff"></div>
<div class="t" style="left:302.24px;top:569.51px;font-size:10.5px;color:#000;transform:scaleX(1.0500);">17</div>
<div class="a" style="left:320.9px;top:569.51px;width:122px;overflow:hidden;white-space:nowrap;line-height:1;font-size:10.5px;color:#000"><span style="display:inline-block;transform:scaleX(0.95);transform-origin:0 0">SUPERMARKET HERMANOS</span></div>
<div class="t" style="left:1087.87px;top:569.51px;font-size:10.5px;color:#000;transform:scaleX(1.0500);">7</div>
<div class="t" style="left:1162.34px;top:569.51px;font-size:10.5px;color:#000;transform:scaleX(1.0500);">0,00</div>
<div class="t" style="left:1214.75px;top:569.51px;font-size:10.5px;color:#000;transform:scaleX(1.0500);">$ 0,00</div>
<div class="t" style="left:1288.18px;top:569.51px;font-size:10.5px;color:#000;transform:scaleX(1.0500);">% 0,00</div>
<div class="a" style="left:214px;top:585px;width:11px;height:11px;border:1.5px solid #000;background:#fff"></div>
<div class="t" style="left:302.24px;top:585.51px;font-size:10.5px;color:#000;transform:scaleX(1.0500);">18</div>
<div class="a" style="left:320.9px;top:585.51px;width:122px;overflow:hidden;white-space:nowrap;line-height:1;font-size:10.5px;color:#000"><span style="display:inline-block;transform:scaleX(0.95);transform-origin:0 0">MARIO LASPADA</span></div>
<div class="t" style="left:1087.87px;top:585.51px;font-size:10.5px;color:#000;transform:scaleX(1.0500);">3</div>
<div class="t" style="left:1162.34px;top:585.51px;font-size:10.5px;color:#000;transform:scaleX(1.0500);">0,00</div>
<div class="t" style="left:1214.75px;top:585.51px;font-size:10.5px;color:#000;transform:scaleX(1.0500);">$ 0,00</div>
<div class="t" style="left:1282.05px;top:585.51px;font-size:10.5px;color:#000;transform:scaleX(1.0500);">% 35,51</div>
<div class="a" style="left:214px;top:601px;width:11px;height:11px;border:1.5px solid #000;background:#fff"></div>
<div class="t" style="left:302.24px;top:601.51px;font-size:10.5px;color:#000;transform:scaleX(1.0500);">19</div>
<div class="a" style="left:320.9px;top:601.51px;width:122px;overflow:hidden;white-space:nowrap;line-height:1;font-size:10.5px;color:#000"><span style="display:inline-block;transform:scaleX(0.95);transform-origin:0 0">JERONIMO MALUVINI</span></div>
<div class="t" style="left:1087.87px;top:601.51px;font-size:10.5px;color:#000;transform:scaleX(1.0500);">0</div>
<div class="t" style="left:1162.34px;top:601.51px;font-size:10.5px;color:#000;transform:scaleX(1.0500);">0,00</div>
<div class="t" style="left:1214.75px;top:601.51px;font-size:10.5px;color:#000;transform:scaleX(1.0500);">$ 0,00</div>
<div class="t" style="left:1288.18px;top:601.51px;font-size:10.5px;color:#000;transform:scaleX(1.0500);">% 0,00</div>
<svg class="a" style="left:210px;top:214px;" width="60" height="400" viewBox="0 0 60 400"><g transform="translate(26,2.5)"><path d="M3 0.5H10L8.5 3.2H4.5Z" fill="#e80000" stroke="#000" stroke-width="0.8"/><path d="M4.5 3.2C1 5.5 0 8 0.5 10.5C1 12.5 3 13 6.5 13C10 13 12 12.5 12.5 10.5C13 8 12 5.5 8.5 3.2Z" fill="#f00000" stroke="#000" stroke-width="0.8"/><path d="M3 2L1.5 3" stroke="#000" stroke-width="0.8"/><path d="M6.5 4.5V12M8.3 6.3C7.5 5.5 5 5.5 5 7C5 8.5 8.2 8 8.2 9.8C8.2 11.3 5.5 11.3 4.7 10.5" stroke="#fff" stroke-width="1.2" fill="none"/></g><g transform="translate(26,18.5)"><path d="M3 0.5H10L8.5 3.2H4.5Z" fill="#e80000" stroke="#000" stroke-width="0.8"/><path d="M4.5 3.2C1 5.5 0 8 0.5 10.5C1 12.5 3 13 6.5 13C10 13 12 12.5 12.5 10.5C13 8 12 5.5 8.5 3.2Z" fill="#f00000" stroke="#000" stroke-width="0.8"/><path d="M3 2L1.5 3" stroke="#000" stroke-width="0.8"/><path d="M6.5 4.5V12M8.3 6.3C7.5 5.5 5 5.5 5 7C5 8.5 8.2 8 8.2 9.8C8.2 11.3 5.5 11.3 4.7 10.5" stroke="#fff" stroke-width="1.2" fill="none"/></g><g transform="translate(26,34.5)"><path d="M3 0.5H10L8.5 3.2H4.5Z" fill="#e80000" stroke="#000" stroke-width="0.8"/><path d="M4.5 3.2C1 5.5 0 8 0.5 10.5C1 12.5 3 13 6.5 13C10 13 12 12.5 12.5 10.5C13 8 12 5.5 8.5 3.2Z" fill="#f00000" stroke="#000" stroke-width="0.8"/><path d="M3 2L1.5 3" stroke="#000" stroke-width="0.8"/><path d="M6.5 4.5V12M8.3 6.3C7.5 5.5 5 5.5 5 7C5 8.5 8.2 8 8.2 9.8C8.2 11.3 5.5 11.3 4.7 10.5" stroke="#fff" stroke-width="1.2" fill="none"/></g><g transform="translate(26,50.5)"><path d="M3 0.5H10L8.5 3.2H4.5Z" fill="#e80000" stroke="#000" stroke-width="0.8"/><path d="M4.5 3.2C1 5.5 0 8 0.5 10.5C1 12.5 3 13 6.5 13C10 13 12 12.5 12.5 10.5C13 8 12 5.5 8.5 3.2Z" fill="#f00000" stroke="#000" stroke-width="0.8"/><path d="M3 2L1.5 3" stroke="#000" stroke-width="0.8"/><path d="M6.5 4.5V12M8.3 6.3C7.5 5.5 5 5.5 5 7C5 8.5 8.2 8 8.2 9.8C8.2 11.3 5.5 11.3 4.7 10.5" stroke="#fff" stroke-width="1.2" fill="none"/></g><g transform="translate(26,66.5)"><path d="M3 0.5H10L8.5 3.2H4.5Z" fill="#e80000" stroke="#000" stroke-width="0.8"/><path d="M4.5 3.2C1 5.5 0 8 0.5 10.5C1 12.5 3 13 6.5 13C10 13 12 12.5 12.5 10.5C13 8 12 5.5 8.5 3.2Z" fill="#f00000" stroke="#000" stroke-width="0.8"/><path d="M3 2L1.5 3" stroke="#000" stroke-width="0.8"/><path d="M6.5 4.5V12M8.3 6.3C7.5 5.5 5 5.5 5 7C5 8.5 8.2 8 8.2 9.8C8.2 11.3 5.5 11.3 4.7 10.5" stroke="#fff" stroke-width="1.2" fill="none"/></g><g transform="translate(26,98.5)"><path d="M3 0.5H10L8.5 3.2H4.5Z" fill="#e80000" stroke="#000" stroke-width="0.8"/><path d="M4.5 3.2C1 5.5 0 8 0.5 10.5C1 12.5 3 13 6.5 13C10 13 12 12.5 12.5 10.5C13 8 12 5.5 8.5 3.2Z" fill="#f00000" stroke="#000" stroke-width="0.8"/><path d="M3 2L1.5 3" stroke="#000" stroke-width="0.8"/><path d="M6.5 4.5V12M8.3 6.3C7.5 5.5 5 5.5 5 7C5 8.5 8.2 8 8.2 9.8C8.2 11.3 5.5 11.3 4.7 10.5" stroke="#fff" stroke-width="1.2" fill="none"/></g><g transform="translate(26,114.5)"><path d="M3 0.5H10L8.5 3.2H4.5Z" fill="#e80000" stroke="#000" stroke-width="0.8"/><path d="M4.5 3.2C1 5.5 0 8 0.5 10.5C1 12.5 3 13 6.5 13C10 13 12 12.5 12.5 10.5C13 8 12 5.5 8.5 3.2Z" fill="#f00000" stroke="#000" stroke-width="0.8"/><path d="M3 2L1.5 3" stroke="#000" stroke-width="0.8"/><path d="M6.5 4.5V12M8.3 6.3C7.5 5.5 5 5.5 5 7C5 8.5 8.2 8 8.2 9.8C8.2 11.3 5.5 11.3 4.7 10.5" stroke="#fff" stroke-width="1.2" fill="none"/></g><g transform="translate(26,130.5)"><path d="M3 0.5H10L8.5 3.2H4.5Z" fill="#e80000" stroke="#000" stroke-width="0.8"/><path d="M4.5 3.2C1 5.5 0 8 0.5 10.5C1 12.5 3 13 6.5 13C10 13 12 12.5 12.5 10.5C13 8 12 5.5 8.5 3.2Z" fill="#f00000" stroke="#000" stroke-width="0.8"/><path d="M3 2L1.5 3" stroke="#000" stroke-width="0.8"/><path d="M6.5 4.5V12M8.3 6.3C7.5 5.5 5 5.5 5 7C5 8.5 8.2 8 8.2 9.8C8.2 11.3 5.5 11.3 4.7 10.5" stroke="#fff" stroke-width="1.2" fill="none"/></g><g transform="translate(26,146.5)"><path d="M3 0.5H10L8.5 3.2H4.5Z" fill="#e80000" stroke="#000" stroke-width="0.8"/><path d="M4.5 3.2C1 5.5 0 8 0.5 10.5C1 12.5 3 13 6.5 13C10 13 12 12.5 12.5 10.5C13 8 12 5.5 8.5 3.2Z" fill="#f00000" stroke="#000" stroke-width="0.8"/><path d="M3 2L1.5 3" stroke="#000" stroke-width="0.8"/><path d="M6.5 4.5V12M8.3 6.3C7.5 5.5 5 5.5 5 7C5 8.5 8.2 8 8.2 9.8C8.2 11.3 5.5 11.3 4.7 10.5" stroke="#fff" stroke-width="1.2" fill="none"/></g><g transform="translate(26,162.5)"><path d="M3 0.5H10L8.5 3.2H4.5Z" fill="#e80000" stroke="#000" stroke-width="0.8"/><path d="M4.5 3.2C1 5.5 0 8 0.5 10.5C1 12.5 3 13 6.5 13C10 13 12 12.5 12.5 10.5C13 8 12 5.5 8.5 3.2Z" fill="#f00000" stroke="#000" stroke-width="0.8"/><path d="M3 2L1.5 3" stroke="#000" stroke-width="0.8"/><path d="M6.5 4.5V12M8.3 6.3C7.5 5.5 5 5.5 5 7C5 8.5 8.2 8 8.2 9.8C8.2 11.3 5.5 11.3 4.7 10.5" stroke="#fff" stroke-width="1.2" fill="none"/></g><g transform="translate(26,178.5)"><path d="M3 0.5H10L8.5 3.2H4.5Z" fill="#e80000" stroke="#000" stroke-width="0.8"/><path d="M4.5 3.2C1 5.5 0 8 0.5 10.5C1 12.5 3 13 6.5 13C10 13 12 12.5 12.5 10.5C13 8 12 5.5 8.5 3.2Z" fill="#f00000" stroke="#000" stroke-width="0.8"/><path d="M3 2L1.5 3" stroke="#000" stroke-width="0.8"/><path d="M6.5 4.5V12M8.3 6.3C7.5 5.5 5 5.5 5 7C5 8.5 8.2 8 8.2 9.8C8.2 11.3 5.5 11.3 4.7 10.5" stroke="#fff" stroke-width="1.2" fill="none"/></g><g transform="translate(26,194.5)"><path d="M3 0.5H10L8.5 3.2H4.5Z" fill="#e80000" stroke="#000" stroke-width="0.8"/><path d="M4.5 3.2C1 5.5 0 8 0.5 10.5C1 12.5 3 13 6.5 13C10 13 12 12.5 12.5 10.5C13 8 12 5.5 8.5 3.2Z" fill="#f00000" stroke="#000" stroke-width="0.8"/><path d="M3 2L1.5 3" stroke="#000" stroke-width="0.8"/><path d="M6.5 4.5V12M8.3 6.3C7.5 5.5 5 5.5 5 7C5 8.5 8.2 8 8.2 9.8C8.2 11.3 5.5 11.3 4.7 10.5" stroke="#fff" stroke-width="1.2" fill="none"/></g><g transform="translate(26,210.5)"><path d="M3 0.5H10L8.5 3.2H4.5Z" fill="#e80000" stroke="#000" stroke-width="0.8"/><path d="M4.5 3.2C1 5.5 0 8 0.5 10.5C1 12.5 3 13 6.5 13C10 13 12 12.5 12.5 10.5C13 8 12 5.5 8.5 3.2Z" fill="#f00000" stroke="#000" stroke-width="0.8"/><path d="M3 2L1.5 3" stroke="#000" stroke-width="0.8"/><path d="M6.5 4.5V12M8.3 6.3C7.5 5.5 5 5.5 5 7C5 8.5 8.2 8 8.2 9.8C8.2 11.3 5.5 11.3 4.7 10.5" stroke="#fff" stroke-width="1.2" fill="none"/></g><g transform="translate(26,226.5)"><path d="M3 0.5H10L8.5 3.2H4.5Z" fill="#e80000" stroke="#000" stroke-width="0.8"/><path d="M4.5 3.2C1 5.5 0 8 0.5 10.5C1 12.5 3 13 6.5 13C10 13 12 12.5 12.5 10.5C13 8 12 5.5 8.5 3.2Z" fill="#f00000" stroke="#000" stroke-width="0.8"/><path d="M3 2L1.5 3" stroke="#000" stroke-width="0.8"/><path d="M6.5 4.5V12M8.3 6.3C7.5 5.5 5 5.5 5 7C5 8.5 8.2 8 8.2 9.8C8.2 11.3 5.5 11.3 4.7 10.5" stroke="#fff" stroke-width="1.2" fill="none"/></g><g transform="translate(26,242.5)"><path d="M3 0.5H10L8.5 3.2H4.5Z" fill="#e80000" stroke="#000" stroke-width="0.8"/><path d="M4.5 3.2C1 5.5 0 8 0.5 10.5C1 12.5 3 13 6.5 13C10 13 12 12.5 12.5 10.5C13 8 12 5.5 8.5 3.2Z" fill="#f00000" stroke="#000" stroke-width="0.8"/><path d="M3 2L1.5 3" stroke="#000" stroke-width="0.8"/><path d="M6.5 4.5V12M8.3 6.3C7.5 5.5 5 5.5 5 7C5 8.5 8.2 8 8.2 9.8C8.2 11.3 5.5 11.3 4.7 10.5" stroke="#fff" stroke-width="1.2" fill="none"/></g><g transform="translate(26,258.5)"><path d="M3 0.5H10L8.5 3.2H4.5Z" fill="#e80000" stroke="#000" stroke-width="0.8"/><path d="M4.5 3.2C1 5.5 0 8 0.5 10.5C1 12.5 3 13 6.5 13C10 13 12 12.5 12.5 10.5C13 8 12 5.5 8.5 3.2Z" fill="#f00000" stroke="#000" stroke-width="0.8"/><path d="M3 2L1.5 3" stroke="#000" stroke-width="0.8"/><path d="M6.5 4.5V12M8.3 6.3C7.5 5.5 5 5.5 5 7C5 8.5 8.2 8 8.2 9.8C8.2 11.3 5.5 11.3 4.7 10.5" stroke="#fff" stroke-width="1.2" fill="none"/></g><g transform="translate(26,290.5)"><path d="M3 0.5H10L8.5 3.2H4.5Z" fill="#e80000" stroke="#000" stroke-width="0.8"/><path d="M4.5 3.2C1 5.5 0 8 0.5 10.5C1 12.5 3 13 6.5 13C10 13 12 12.5 12.5 10.5C13 8 12 5.5 8.5 3.2Z" fill="#f00000" stroke="#000" stroke-width="0.8"/><path d="M3 2L1.5 3" stroke="#000" stroke-width="0.8"/><path d="M6.5 4.5V12M8.3 6.3C7.5 5.5 5 5.5 5 7C5 8.5 8.2 8 8.2 9.8C8.2 11.3 5.5 11.3 4.7 10.5" stroke="#fff" stroke-width="1.2" fill="none"/></g><g transform="translate(26,306.5)"><path d="M3 0.5H10L8.5 3.2H4.5Z" fill="#e80000" stroke="#000" stroke-width="0.8"/><path d="M4.5 3.2C1 5.5 0 8 0.5 10.5C1 12.5 3 13 6.5 13C10 13 12 12.5 12.5 10.5C13 8 12 5.5 8.5 3.2Z" fill="#f00000" stroke="#000" stroke-width="0.8"/><path d="M3 2L1.5 3" stroke="#000" stroke-width="0.8"/><path d="M6.5 4.5V12M8.3 6.3C7.5 5.5 5 5.5 5 7C5 8.5 8.2 8 8.2 9.8C8.2 11.3 5.5 11.3 4.7 10.5" stroke="#fff" stroke-width="1.2" fill="none"/></g><g transform="translate(26,322.5)"><path d="M3 0.5H10L8.5 3.2H4.5Z" fill="#e80000" stroke="#000" stroke-width="0.8"/><path d="M4.5 3.2C1 5.5 0 8 0.5 10.5C1 12.5 3 13 6.5 13C10 13 12 12.5 12.5 10.5C13 8 12 5.5 8.5 3.2Z" fill="#f00000" stroke="#000" stroke-width="0.8"/><path d="M3 2L1.5 3" stroke="#000" stroke-width="0.8"/><path d="M6.5 4.5V12M8.3 6.3C7.5 5.5 5 5.5 5 7C5 8.5 8.2 8 8.2 9.8C8.2 11.3 5.5 11.3 4.7 10.5" stroke="#fff" stroke-width="1.2" fill="none"/></g><g transform="translate(26,338.5)"><path d="M3 0.5H10L8.5 3.2H4.5Z" fill="#e80000" stroke="#000" stroke-width="0.8"/><path d="M4.5 3.2C1 5.5 0 8 0.5 10.5C1 12.5 3 13 6.5 13C10 13 12 12.5 12.5 10.5C13 8 12 5.5 8.5 3.2Z" fill="#f00000" stroke="#000" stroke-width="0.8"/><path d="M3 2L1.5 3" stroke="#000" stroke-width="0.8"/><path d="M6.5 4.5V12M8.3 6.3C7.5 5.5 5 5.5 5 7C5 8.5 8.2 8 8.2 9.8C8.2 11.3 5.5 11.3 4.7 10.5" stroke="#fff" stroke-width="1.2" fill="none"/></g><g transform="translate(26,354.5)"><path d="M3 0.5H10L8.5 3.2H4.5Z" fill="#e80000" stroke="#000" stroke-width="0.8"/><path d="M4.5 3.2C1 5.5 0 8 0.5 10.5C1 12.5 3 13 6.5 13C10 13 12 12.5 12.5 10.5C13 8 12 5.5 8.5 3.2Z" fill="#f00000" stroke="#000" stroke-width="0.8"/><path d="M3 2L1.5 3" stroke="#000" stroke-width="0.8"/><path d="M6.5 4.5V12M8.3 6.3C7.5 5.5 5 5.5 5 7C5 8.5 8.2 8 8.2 9.8C8.2 11.3 5.5 11.3 4.7 10.5" stroke="#fff" stroke-width="1.2" fill="none"/></g><g transform="translate(26,370.5)"><path d="M3 0.5H10L8.5 3.2H4.5Z" fill="#e80000" stroke="#000" stroke-width="0.8"/><path d="M4.5 3.2C1 5.5 0 8 0.5 10.5C1 12.5 3 13 6.5 13C10 13 12 12.5 12.5 10.5C13 8 12 5.5 8.5 3.2Z" fill="#f00000" stroke="#000" stroke-width="0.8"/><path d="M3 2L1.5 3" stroke="#000" stroke-width="0.8"/><path d="M6.5 4.5V12M8.3 6.3C7.5 5.5 5 5.5 5 7C5 8.5 8.2 8 8.2 9.8C8.2 11.3 5.5 11.3 4.7 10.5" stroke="#fff" stroke-width="1.2" fill="none"/></g><g transform="translate(26,386.5)"><path d="M3 0.5H10L8.5 3.2H4.5Z" fill="#e80000" stroke="#000" stroke-width="0.8"/><path d="M4.5 3.2C1 5.5 0 8 0.5 10.5C1 12.5 3 13 6.5 13C10 13 12 12.5 12.5 10.5C13 8 12 5.5 8.5 3.2Z" fill="#f00000" stroke="#000" stroke-width="0.8"/><path d="M3 2L1.5 3" stroke="#000" stroke-width="0.8"/><path d="M6.5 4.5V12M8.3 6.3C7.5 5.5 5 5.5 5 7C5 8.5 8.2 8 8.2 9.8C8.2 11.3 5.5 11.3 4.7 10.5" stroke="#fff" stroke-width="1.2" fill="none"/></g></svg>
<div class="t" style="left:445.00px;top:281.51px;font-size:10.5px;color:#000;">5</div>
<div class="t" style="left:444.50px;top:201.11px;font-size:10.5px;color:#fff;">C</div>
<div class="a" style="left:210px;top:614px;width:1139px;height:9px;background:#c0c0c0;"></div>
<div class="a" style="left:1349px;top:196px;width:16px;height:444px;background:#f0f0f0;"></div>
<div class="a" style="left:1350px;top:214px;width:14px;height:175px;background:#cdcdcd;"></div>
<svg class="a" style="left:1351px;top:200px;" width="12" height="10" viewBox="0 0 12 10"><path d="M2 7L6 3L10 7" fill="none" stroke="#606060" stroke-width="1.5"/></svg>
<svg class="a" style="left:1351px;top:610px;" width="12" height="10" viewBox="0 0 12 10"><path d="M2 3L6 7L10 3" fill="none" stroke="#606060" stroke-width="1.5"/></svg>
<div class="a" style="left:210px;top:623px;width:1139px;height:17px;background:#f0f0f0;"></div>
<div class="a" style="left:228px;top:624px;width:17px;height:15px;background:#cdcdcd;"></div>
<svg class="a" style="left:214px;top:626px;" width="10" height="11" viewBox="0 0 10 11"><path d="M7 1.5L3 5.5L7 9.5" fill="none" stroke="#606060" stroke-width="1.5"/></svg>
<svg class="a" style="left:1335px;top:626px;" width="10" height="11" viewBox="0 0 10 11"><path d="M3 1.5L7 5.5L3 9.5" fill="none" stroke="#606060" stroke-width="1.5"/></svg>
<div class="a" style="left:210px;top:196px;width:1px;height:444px;background:#a0a0a0;"></div>
<svg class="a" style="left:1355px;top:436px;" width="10" height="26" viewBox="0 0 10 26"><path d="M6.5 5V22L10.5 18.5M6.5 5L10.5 8.5" fill="#fff" stroke="#111" stroke-width="1.3"/><path d="M7.2 6.5V20.5L10 18V9Z" fill="#fff"/></svg>
<div class="a" style="left:428px;top:130px;width:20px;height:514px;background:linear-gradient(90deg,rgba(0,0,0,0),rgba(0,0,0,0.07))"></div>
<div class="a" style="left:210px;top:640px;width:1155px;height:1px;background:#6b6b6b;"></div>
<div class="a" style="left:210px;top:641px;width:1155px;height:3px;background:#f0f0f0;"></div>
<div class="a" style="left:210px;top:644px;width:1155px;height:2px;background:#a0a0a0;"></div>
<div class="a" style="left:210px;top:646px;width:1155px;height:18px;background:#f0f0f0;"></div>
<div class="a" style="left:210px;top:664px;width:1155px;height:43px;background:#fffde7;"></div>
<div class="a" style="left:210px;top:707px;width:1155px;height:2px;background:#e4e4e4;"></div>
<div class="a" style="left:210px;top:644px;width:1px;height:65px;background:#a0a0a0;"></div>
<div class="t" style="left:213.00px;top:649.07px;font-size:11.5px;color:#7b0a0a;font-weight:bold;transform:scaleX(1.0361);">Totales:</div>
<div class="t" style="left:213.50px;top:667.19px;font-size:11px;color:#000;font-weight:bold;transform:scaleX(1.1079);">Total de Datos = 37</div>
<div class="t" style="left:213.50px;top:682.19px;font-size:11px;color:#000;font-weight:bold;transform:scaleX(1.0994);">Saldos = 18.014.461.500,29</div>
<div class="t" style="left:597.00px;top:667.19px;font-size:11px;color:#000;font-weight:bold;transform:scaleX(1.0921);">Saldo Vencido = 18.120.008.497,63</div>
<div class="t" style="left:597.00px;top:682.19px;font-size:11px;color:#000;font-weight:bold;transform:scaleX(1.1051);">Saldo A Vencer = -105.546.997,34</div>
<div class="t" style="left:981.00px;top:667.19px;font-size:11px;color:#000;font-weight:bold;transform:scaleX(1.1133);">Débitos = 18.120.008.497,63</div>
<div class="t" style="left:981.00px;top:682.19px;font-size:11px;color:#000;font-weight:bold;transform:scaleX(1.1146);">Créditos = -105.546.997,34</div>
<div class="a" style="left:448px;top:121px;width:640px;height:521px;box-shadow:0 0 12px 2px rgba(0,0,0,0.18)"></div>
<div class="a" style="left:448px;top:121px;width:641px;height:521px;background:#f0f0f0;border:1px solid #6c6c6c;"></div>
<div class="a" style="left:449px;top:122px;width:639px;height:50px;background:#fff;"></div>
<svg class="a" style="left:457px;top:128px;" width="16" height="16" viewBox="0 0 16 16"><defs><linearGradient id="g3" x1="0.3" y1="0" x2="0.5" y2="1"><stop offset="0" stop-color="#c9e3f7"/><stop offset="0.3" stop-color="#4f8fcf"/><stop offset="0.6" stop-color="#1458a4"/><stop offset="0.85" stop-color="#6cc4ee"/><stop offset="1" stop-color="#d8f4ff"/></linearGradient>
<radialGradient id="g3h" cx="0.5" cy="0.5" r="0.5"><stop offset="0" stop-color="#fff" stop-opacity="1"/><stop offset="1" stop-color="#fff" stop-opacity="0"/></radialGradient></defs>
<circle cx="8.0" cy="8.0" r="7.4" fill="url(#g3)" stroke="#7d8ea0" stroke-width="0.7"/>
<ellipse cx="8.8" cy="4.96" rx="3.04" ry="2.0" fill="url(#g3h)"/><ellipse cx="3.6" cy="7.6" rx="1.6" ry="1.2" fill="url(#g3h)" opacity="0.7"/></svg>
<div class="t" style="left:478.40px;top:130.84px;font-size:12px;color:#000;transform:scaleX(0.9771);">Detalle de Cuenta Corriente del Cliente</div>
<div class="a" style="left:969px;top:136px;width:11px;height:1px;background:#c4c4c4;"></div>
<div class="a" style="left:1013.5px;top:131.5px;width:10px;height:10px;border:1px solid #000;"></div>
<svg class="a" style="left:1059px;top:130px;" width="13" height="12" viewBox="0 0 13 12"><path d="M1 1L11.5 11.5M11.5 1L1 11.5" stroke="#000" stroke-width="1.1"/></svg>
<div class="t" style="left:456.00px;top:156.14px;font-size:12px;color:#000;transform:scaleX(1.0096);">Archivo</div>
<div class="t" style="left:511.00px;top:156.14px;font-size:12px;color:#000;transform:scaleX(0.9655);">Edición</div>
<div class="t" style="left:564.00px;top:156.14px;font-size:12px;color:#000;transform:scaleX(0.9228);">Ir a</div>
<div class="a" style="left:449px;top:171px;width:638px;height:1px;background:#b9b9b9;"></div>
<div class="a" style="left:449px;top:172px;width:638px;height:25px;background:#fbfbfb;"></div>
<div class="a" style="left:449px;top:196px;width:638px;height:1px;background:#b9b9b9;"></div>
<div class="a" style="left:449px;top:197px;width:638px;height:1px;background:#fdfdfd;"></div>
<div class="a" style="left:455px;top:177px;width:1.5px;height:2px;background:#9a9a9a;"></div>
<div class="a" style="left:455px;top:181px;width:1.5px;height:2px;background:#9a9a9a;"></div>
<div class="a" style="left:455px;top:185px;width:1.5px;height:2px;background:#9a9a9a;"></div>
<div class="a" style="left:455px;top:189px;width:1.5px;height:2px;background:#9a9a9a;"></div>
<div class="a" style="left:455px;top:193px;width:1.5px;height:2px;background:#9a9a9a;"></div>
<svg class="a" style="left:0px;top:0px;" width="1" height="1" viewBox="0 0 1 1"><path d="M467.5 181.5V192.5H481.5V181.5Z" fill="#fff" stroke="#9a9a9a" stroke-width="1.2"/><path d="M467 178H478L481.5 181.5H467Z" fill="#9a9a9a"/><rect x="493" y="177" width="16" height="15.5" fill="#9b9b9b"/><rect x="523" y="177" width="9" height="7" fill="#f1f3f7" stroke="#6b7785" stroke-width="0.9"/><rect x="519.5" y="183.5" width="15" height="5" rx="1" fill="#1e78e0" stroke="#46525e" stroke-width="0.9"/><rect x="521" y="188" width="12" height="4" fill="#e9edf2" stroke="#46525e" stroke-width="0.9"/><rect x="542" y="176" width="1" height="19" fill="#8a8a8a"/><rect x="553" y="177" width="16" height="15.5" fill="#9b9b9b"/><path d="M583 184A4.5 4.5 0 1 1 588 189.5" fill="none" stroke="#9b9b9b" stroke-width="2.6"/><path d="M584.5 186L588.5 192L590.5 187Z" fill="#9b9b9b"/><path d="M606 180H620V181.8H606Z" fill="#9b9b9b"/><path d="M610 178H616V180H610Z" fill="#9b9b9b"/><path d="M607.3 182.5H618.7L617.5 192.5H608.5Z" fill="#a8a8a8"/><path d="M610 184V191M613 184V191M616 184V191" stroke="#d0d0d0" stroke-width="0.8"/><rect x="628" y="176" width="1" height="19" fill="#8a8a8a"/><path d="M644.5 179.5H651.5V185H655.5L648 192.5L640.5 185H644.5Z" fill="#a9d0f5" stroke="#2a6cc4" stroke-width="1.2"/><path d="M664 184H671L667.5 188Z" fill="#222"/><path d="M685.5 192H692.5V186.5H696.5L689 179L681.5 186.5H685.5Z" fill="#a9d0f5" stroke="#2a6cc4" stroke-width="1.2"/><path d="M705 184H712L708.5 188Z" fill="#222"/><circle cx="729" cy="184.8" r="7.6" fill="#1f6fd6" stroke="#1450a8" stroke-width="1"/><circle cx="729" cy="184.8" r="6" fill="none" stroke="#8fc4f6" stroke-width="0.8"/><text x="729" y="189.2" font-family="Liberation Sans" font-weight="bold" font-size="11.5" fill="#fff" text-anchor="middle">?</text><rect x="744" y="176" width="1" height="19" fill="#8a8a8a"/><path d="M755.5 183L762 177L769.5 183V192H755.5Z" fill="#dfeaf5" stroke="#2c2c2c" stroke-width="1"/><rect x="757" y="184" width="8" height="7" fill="#b8b8b8"/><rect x="767" y="184" width="1.5" height="1.5" fill="#e33"/></svg>
<div class="a" style="left:777px;top:172px;width:310px;height:26px;background:#fff;border:1px solid #9a9a9a;"></div>
<div class="a" style="left:777px;top:175px;width:148px;height:20px;background:#008000;border:1px solid #707070;"></div>
<div class="t" style="left:811.80px;top:180.89px;font-size:11px;color:#fff;font-weight:bold;transform:scaleX(1.0708);">Cliente Activo</div>
<div class="t" style="left:460.20px;top:209.79px;font-size:11px;color:#000;transform:scaleX(0.9600);">Cuenta</div>
<div class="a" style="left:528px;top:205px;width:39px;height:19px;background:#fff;border:1px solid #7a7a7a"></div>
<div class="t" style="left:557.38px;top:209.69px;font-size:11px;color:#000;">1</div>
<div class="a" style="left:569px;top:205px;width:19px;height:19px;background:#fff;border:1px solid #7a7a7a"></div>
<div class="t" style="left:571.00px;top:209.69px;font-size:11px;color:#000;">01</div>
<div class="t" style="left:460.20px;top:229.49px;font-size:11px;color:#000;transform:scaleX(0.9289);">Razón Social</div>
<div class="a" style="left:528px;top:226px;width:300px;height:19px;background:#fff;border:1px solid #7a7a7a"></div>
<div class="t" style="left:530.20px;top:230.61px;font-size:10.5px;color:#000;transform:scaleX(0.9189);">JUAN MARCELO PEREZ VERDI</div>
<div class="t" style="left:881.20px;top:209.69px;font-size:11px;color:#000;transform:scaleX(0.9641);">Incidencia Sobre el</div>
<div class="t" style="left:881.20px;top:222.19px;font-size:11px;color:#000;transform:scaleX(0.9640);">Total Procesado</div>
<div class="t" style="left:1002.60px;top:211.49px;font-size:17.5px;color:#000080;font-weight:bold;transform:scaleX(1.2884);">% 0,00</div>
<div class="a" style="left:450px;top:248px;width:636px;height:1px;background:#a8a8a8;"></div>
<div class="a" style="left:451px;top:250px;width:635px;height:16px;background:linear-gradient(90deg,#1b84c6 0%,#3a93cc 35%,#6aa7d2 70%,#93b5d6 100%)"></div>
<div class="t" style="left:463.10px;top:252.59px;font-size:11px;color:#fff;font-weight:bold;transform:scaleX(1.0783);">Información de Contacto</div>
<div class="t" style="left:460.20px;top:276.89px;font-size:11px;color:#000;transform:scaleX(0.9600);">Contacto</div>
<div class="a" style="left:528px;top:272px;width:300px;height:19px;background:#fff;border:1px solid #7a7a7a"></div>
<div class="t" style="left:858.00px;top:276.29px;font-size:11px;color:#000;transform:scaleX(0.9859);">Teléfono</div>
<div class="a" style="left:904px;top:272px;width:137px;height:19px;background:#fff;border:1px solid #7a7a7a"></div>
<div class="t" style="left:460.20px;top:297.99px;font-size:11px;color:#000;transform:scaleX(0.9600);">Emails</div>
<div class="a" style="left:528px;top:294px;width:513px;height:19px;background:#fff;border:1px solid #7a7a7a"></div>
<div class="t" style="left:529.60px;top:298.49px;font-size:11px;color:#000;transform:scaleX(0.9857);">jvarela@digital-express.com.ar</div>
<div class="a" style="left:1047px;top:294px;width:25px;height:19px;border:1px solid #b0b0b0;border-radius:2px;background:linear-gradient(#fdfdfd,#e6e6e6)"></div>
<svg class="a" style="left:1052px;top:297px;" width="15" height="13" viewBox="0 0 15 13"><rect x="0.5" y="0.5" width="13" height="12" fill="#cfe6fb" stroke="#2a6cc4"/><path d="M3 10L11 2" stroke="#e0a020" stroke-width="2"/><path d="M2 11H12" stroke="#555" stroke-width="0.8"/></svg>
<div class="a" style="left:450px;top:318px;width:636px;height:1px;background:#a8a8a8;"></div>
<div class="a" style="left:451px;top:320px;width:635px;height:16.5px;background:linear-gradient(90deg,#1b84c6 0%,#3a93cc 35%,#6aa7d2 70%,#93b5d6 100%)"></div>
<div class="t" style="left:463.30px;top:322.39px;font-size:11px;color:#fff;font-weight:bold;transform:scaleX(1.0768);">Detalle de la Cuenta Corriente</div>
<div class="a" style="left:450px;top:336px;width:636px;height:153px;background:#fff;border:1px solid #8c8c8c;border-top:none;"></div>
<div class="a" style="left:451px;top:336.5px;width:617px;height:17px;background:#808080;"></div>
<div class="a" style="left:451px;top:336px;width:617px;height:18px;overflow:hidden">
<div class="t" style="left:2.5px;top:4.71px;font-size:10.5px;color:#fff;transform:scaleX(1.03)">E</div>
<div class="t" style="left:19.6px;top:4.71px;font-size:10.5px;color:#fff;transform:scaleX(1.03)">Tipo</div>
<div class="t" style="left:44.0px;top:4.71px;font-size:10.5px;color:#fff;transform:scaleX(1.03)">Letra</div>
<div class="t" style="left:73.9px;top:4.71px;font-size:10.5px;color:#fff;transform:scaleX(1.03)">Nº de Comprobante</div>
<div class="t" style="left:174.2px;top:4.71px;font-size:10.5px;color:#fff;transform:scaleX(1.03)">Fec. Emisión</div>
<div class="t" style="left:251.0px;top:4.71px;font-size:10.5px;color:#fff;transform:scaleX(1.03)">Fec. Vencimiento</div>
<div class="t" style="left:337.3px;top:4.71px;font-size:10.5px;color:#fff;transform:scaleX(1.03)">Moneda</div>
<div class="t" style="left:380.3px;top:4.71px;font-size:10.5px;color:#fff;transform:scaleX(1.03)">Imp. Nominal</div>
<div class="t" style="left:457.3px;top:4.71px;font-size:10.5px;color:#fff;transform:scaleX(1.03)">Saldo Actual</div>
<div class="t" style="left:534.2px;top:4.71px;font-size:10.5px;color:#fff;transform:scaleX(1.03)">Estado</div>
</div>
<div class="a" style="left:468px;top:353.5px;width:1px;height:112.5px;background:#a0a0a0;"></div>
<div class="a" style="left:493px;top:353.5px;width:1px;height:112.5px;background:#a0a0a0;"></div>
<div class="a" style="left:523px;top:353.5px;width:1px;height:112.5px;background:#a0a0a0;"></div>
<div class="a" style="left:623px;top:353.5px;width:1px;height:112.5px;background:#a0a0a0;"></div>
<div class="a" style="left:700px;top:353.5px;width:1px;height:112.5px;background:#a0a0a0;"></div>
<div class="a" style="left:786px;top:353.5px;width:1px;height:112.5px;background:#a0a0a0;"></div>
<div class="a" style="left:829px;top:353.5px;width:1px;height:112.5px;background:#a0a0a0;"></div>
<div class="a" style="left:906px;top:353.5px;width:1px;height:112.5px;background:#a0a0a0;"></div>
<div class="a" style="left:983px;top:353.5px;width:1px;height:112.5px;background:#a0a0a0;"></div>
<div class="t" style="left:472.69px;top:357.71px;font-size:10.5px;color:#000;transform:scaleX(1.0300);">RC</div>
<div class="t" style="left:534.44px;top:357.71px;font-size:10.5px;color:#000;transform:scaleX(1.0320);">0005-00000016</div>
<div class="t" style="left:634.11px;top:357.71px;font-size:10.5px;color:#000;transform:scaleX(1.0540);">24/06/2022</div>
<div class="t" style="left:714.91px;top:357.71px;font-size:10.5px;color:#000;transform:scaleX(1.0540);">24/06/2022</div>
<div class="t" style="left:788.30px;top:357.71px;font-size:10.5px;color:#000;transform:scaleX(1.0300);">USD</div>
<div class="t" style="left:852.76px;top:357.71px;font-size:10.5px;color:#000;transform:scaleX(1.0500);">43.400,00</div>
<div class="t" style="left:929.66px;top:357.71px;font-size:10.5px;color:#000;transform:scaleX(1.0500);">43.400,00</div>
<div class="t" style="left:985.20px;top:357.71px;font-size:10.5px;color:#000;">Sin Novedad</div>
<div class="t" style="left:472.99px;top:373.71px;font-size:10.5px;color:#000;transform:scaleX(1.0300);">SC</div>
<div class="t" style="left:534.44px;top:373.71px;font-size:10.5px;color:#000;transform:scaleX(1.0320);">0005-00000008</div>
<div class="t" style="left:634.11px;top:373.71px;font-size:10.5px;color:#000;transform:scaleX(1.0540);">24/06/2022</div>
<div class="t" style="left:714.91px;top:373.71px;font-size:10.5px;color:#000;transform:scaleX(1.0540);">24/06/2022</div>
<div class="t" style="left:788.30px;top:373.71px;font-size:10.5px;color:#000;transform:scaleX(1.0300);">USD</div>
<div class="t" style="left:852.76px;top:373.71px;font-size:10.5px;color:#000;transform:scaleX(1.0500);">47.600,00</div>
<div class="t" style="left:929.66px;top:373.71px;font-size:10.5px;color:#000;transform:scaleX(1.0500);">47.600,00</div>
<div class="t" style="left:985.20px;top:373.71px;font-size:10.5px;color:#000;">Sin Novedad</div>
<div class="t" style="left:472.69px;top:389.71px;font-size:10.5px;color:#000;transform:scaleX(1.0300);">RC</div>
<div class="t" style="left:534.44px;top:389.71px;font-size:10.5px;color:#000;transform:scaleX(1.0320);">0005-00000017</div>
<div class="t" style="left:634.11px;top:389.71px;font-size:10.5px;color:#000;transform:scaleX(1.0540);">24/06/2022</div>
<div class="t" style="left:714.91px;top:389.71px;font-size:10.5px;color:#000;transform:scaleX(1.0540);">24/06/2022</div>
<div class="t" style="left:788.30px;top:389.71px;font-size:10.5px;color:#000;transform:scaleX(1.0300);">USD</div>
<div class="t" style="left:852.76px;top:389.71px;font-size:10.5px;color:#000;transform:scaleX(1.0500);">43.400,00</div>
<div class="t" style="left:929.66px;top:389.71px;font-size:10.5px;color:#000;transform:scaleX(1.0500);">43.400,00</div>
<div class="t" style="left:985.20px;top:389.71px;font-size:10.5px;color:#000;">Sin Novedad</div>
<div class="t" style="left:473.29px;top:405.71px;font-size:10.5px;color:#000;transform:scaleX(1.0300);">FC</div>
<div class="t" style="left:504.39px;top:405.71px;font-size:10.5px;color:#000;transform:scaleX(1.0300);">A</div>
<div class="t" style="left:534.44px;top:405.71px;font-size:10.5px;color:#000;transform:scaleX(1.0320);">0005-00000407</div>
<div class="t" style="left:634.11px;top:405.71px;font-size:10.5px;color:#000;transform:scaleX(1.0540);">27/12/2022</div>
<div class="t" style="left:714.91px;top:405.71px;font-size:10.5px;color:#000;transform:scaleX(1.0540);">28/12/2022</div>
<div class="t" style="left:788.30px;top:405.71px;font-size:10.5px;color:#000;transform:scaleX(1.0300);">USD</div>
<div class="t" style="left:852.76px;top:405.71px;font-size:10.5px;color:#000;transform:scaleX(1.0500);">14.520,00</div>
<div class="t" style="left:929.66px;top:405.71px;font-size:10.5px;color:#000;transform:scaleX(1.0500);">14.520,00</div>
<div class="t" style="left:985.20px;top:405.71px;font-size:10.5px;color:#000;">Sin Novedad</div>
<div class="t" style="left:473.29px;top:421.71px;font-size:10.5px;color:#000;transform:scaleX(1.0300);">FC</div>
<div class="t" style="left:504.39px;top:421.71px;font-size:10.5px;color:#000;transform:scaleX(1.0300);">A</div>
<div class="t" style="left:534.44px;top:421.71px;font-size:10.5px;color:#000;transform:scaleX(1.0320);">0006-00000006</div>
<div class="t" style="left:634.11px;top:421.71px;font-size:10.5px;color:#000;transform:scaleX(1.0540);">27/12/2022</div>
<div class="t" style="left:714.91px;top:421.71px;font-size:10.5px;color:#000;transform:scaleX(1.0540);">28/12/2022</div>
<div class="t" style="left:788.30px;top:421.71px;font-size:10.5px;color:#000;transform:scaleX(1.0300);">USD</div>
<div class="t" style="left:858.89px;top:421.71px;font-size:10.5px;color:#000;transform:scaleX(1.0500);">2.178,00</div>
<div class="t" style="left:935.79px;top:421.71px;font-size:10.5px;color:#000;transform:scaleX(1.0500);">2.178,00</div>
<div class="t" style="left:985.20px;top:421.71px;font-size:10.5px;color:#000;">Sin Novedad</div>
<div class="t" style="left:472.69px;top:437.71px;font-size:10.5px;color:#000;transform:scaleX(1.0300);">RC</div>
<div class="t" style="left:534.44px;top:437.71px;font-size:10.5px;color:#000;transform:scaleX(1.0320);">0005-00000028</div>
<div class="t" style="left:634.11px;top:437.71px;font-size:10.5px;color:#000;transform:scaleX(1.0540);">01/02/2023</div>
<div class="t" style="left:714.91px;top:437.71px;font-size:10.5px;color:#000;transform:scaleX(1.0540);">01/02/2023</div>
<div class="t" style="left:788.30px;top:437.71px;font-size:10.5px;color:#000;transform:scaleX(1.0300);">USD</div>
<div class="t" style="left:874.21px;top:437.71px;font-size:10.5px;color:#000;transform:scaleX(1.0500);">20,00</div>
<div class="t" style="left:951.11px;top:437.71px;font-size:10.5px;color:#000;transform:scaleX(1.0500);">20,00</div>
<div class="t" style="left:985.20px;top:437.71px;font-size:10.5px;color:#000;">Sin Novedad</div>
<div class="a" style="left:451px;top:449.7px;width:617px;height:16px;background:#0e79c9;"></div>
<div class="a" style="left:468px;top:449.7px;width:1px;height:16px;border-left:1px dotted #e07a20;"></div>
<div class="a" style="left:493px;top:449.7px;width:1px;height:16px;border-left:1px dotted #e07a20;"></div>
<div class="a" style="left:523px;top:449.7px;width:1px;height:16px;border-left:1px dotted #e07a20;"></div>
<div class="a" style="left:623px;top:449.7px;width:1px;height:16px;border-left:1px dotted #e07a20;"></div>
<div class="a" style="left:700px;top:449.7px;width:1px;height:16px;border-left:1px dotted #e07a20;"></div>
<div class="a" style="left:786px;top:449.7px;width:1px;height:16px;border-left:1px dotted #e07a20;"></div>
<div class="a" style="left:829px;top:449.7px;width:1px;height:16px;border-left:1px dotted #e07a20;"></div>
<div class="a" style="left:906px;top:449.7px;width:1px;height:16px;border-left:1px dotted #e07a20;"></div>
<div class="a" style="left:983px;top:449.7px;width:1px;height:16px;border-left:1px dotted #e07a20;"></div>
<div class="t" style="left:474.20px;top:453.71px;font-size:10.5px;color:#fff;font-weight:bold;transform:scaleX(0.9627);">RC</div>
<div class="t" style="left:529.00px;top:453.71px;font-size:10.5px;color:#fff;font-weight:bold;transform:scaleX(1.2057);">0005-00000029</div>
<div class="t" style="left:628.00px;top:453.71px;font-size:10.5px;color:#fff;font-weight:bold;transform:scaleX(1.2941);">01/02/2023</div>
<div class="t" style="left:708.80px;top:453.71px;font-size:10.5px;color:#fff;font-weight:bold;transform:scaleX(1.2979);">01/02/2023</div>
<div class="t" style="left:789.50px;top:453.71px;font-size:10.5px;color:#fff;font-weight:bold;transform:scaleX(1.0059);">USD</div>
<div class="t" style="left:865.00px;top:453.71px;font-size:10.5px;color:#fff;font-weight:bold;transform:scaleX(1.1709);">100,00</div>
<div class="t" style="left:942.80px;top:453.71px;font-size:10.5px;color:#fff;font-weight:bold;transform:scaleX(1.1522);">100,00</div>
<div class="t" style="left:985.90px;top:453.71px;font-size:10.5px;color:#fff;font-weight:bold;transform:scaleX(1.0850);">Sin Novedad</div>
<svg class="a" style="left:0px;top:0px;" width="1" height="1" viewBox="0 0 1 1"><defs><radialGradient id="gd" cx="0.45" cy="0.35" r="0.65"><stop offset="0" stop-color="#b9f0a8"/><stop offset="0.5" stop-color="#3fb33a"/><stop offset="1" stop-color="#17701a"/></radialGradient><radialGradient id="rd" cx="0.45" cy="0.35" r="0.65"><stop offset="0" stop-color="#ffc7a0"/><stop offset="0.5" stop-color="#f2561e"/><stop offset="1" stop-color="#a8300a"/></radialGradient></defs><circle cx="458.5" cy="362.2" r="5.4" fill="url(#gd)" stroke="#2c6a2c" stroke-width="0.6"/><circle cx="458.5" cy="378.2" r="5.4" fill="url(#gd)" stroke="#2c6a2c" stroke-width="0.6"/><circle cx="458.5" cy="394.2" r="5.4" fill="url(#gd)" stroke="#2c6a2c" stroke-width="0.6"/><circle cx="458.5" cy="410.2" r="5.4" fill="url(#rd)" stroke="#8a3010" stroke-width="0.6"/><circle cx="458.5" cy="426.2" r="5.4" fill="url(#rd)" stroke="#8a3010" stroke-width="0.6"/><circle cx="458.5" cy="442.2" r="5.4" fill="url(#gd)" stroke="#2c6a2c" stroke-width="0.6"/><circle cx="458.5" cy="458.2" r="5.4" fill="url(#gd)" stroke="#2c6a2c" stroke-width="0.6"/></svg>
<div class="a" style="left:451px;top:465.7px;width:617px;height:5.5px;background:#c4c4c4;"></div>
<div class="a" style="left:1068px;top:336.5px;width:17px;height:135px;background:#f0f0f0;"></div>
<div class="a" style="left:1069px;top:395px;width:15px;height:21px;background:#cdcdcd;"></div>
<svg class="a" style="left:1071px;top:341px;" width="12" height="9" viewBox="0 0 12 9"><path d="M2 6.5L6 2.5L10 6.5" fill="none" stroke="#606060" stroke-width="1.4"/></svg>
<svg class="a" style="left:1071px;top:459px;" width="12" height="9" viewBox="0 0 12 9"><path d="M2 2.5L6 6.5L10 2.5" fill="none" stroke="#606060" stroke-width="1.4"/></svg>
<div class="a" style="left:451px;top:471px;width:634px;height:17px;background:#f0f0f0;"></div>
<div class="a" style="left:469px;top:472px;width:16.5px;height:15px;background:#cdcdcd;"></div>
<svg class="a" style="left:455px;top:474px;" width="10" height="11" viewBox="0 0 10 11"><path d="M7 1.5L3 5.5L7 9.5" fill="none" stroke="#606060" stroke-width="1.4"/></svg>
<svg class="a" style="left:1055px;top:474px;" width="10" height="11" viewBox="0 0 10 11"><path d="M3 1.5L7 5.5L3 9.5" fill="none" stroke="#606060" stroke-width="1.4"/></svg>
<div class="a" style="left:450px;top:488px;width:636px;height:1px;background:#7a7a7a;"></div>
<div class="a" style="left:1085px;top:336px;width:1px;height:153px;background:#7a7a7a;"></div>
<div class="a" style="left:453.5px;top:492.5px;width:124px;height:23px;border:1px solid #bdbdbd;border-radius:3px;background:linear-gradient(#fbfbfb,#e4e4e4)"></div>
<svg class="a" style="left:461px;top:495px;" width="16" height="17" viewBox="0 0 16 17"><rect x="1" y="3" width="13" height="13" fill="#d6ebfb" stroke="#e0a020" stroke-width="1.2"/><rect x="1" y="3" width="13" height="3" fill="#2a78c8"/><rect x="4" y="0.8" width="7" height="3" fill="none" stroke="#2a78c8" stroke-width="1.2"/></svg>
<div class="t" style="left:480.00px;top:497.49px;font-size:11px;color:#000;transform:scaleX(1.0300);">Ver Comprobante</div>
<div class="a" style="left:450px;top:519px;width:636px;height:1px;background:#b0b0b0;"></div>
<div class="a" style="left:450px;top:519px;width:1px;height:102px;background:#a8a8a8;"></div>
<div class="t" style="left:461.40px;top:527.09px;font-size:11px;color:#000;transform:scaleX(0.9850);">Cant. Facturas</div>
<div class="t" style="left:610.22px;top:527.09px;font-size:11px;color:#000;font-weight:bold;transform:scaleX(1.0200);">13</div>
<div class="t" style="left:461.40px;top:544.59px;font-size:11px;color:#000;transform:scaleX(0.9850);">Cant. Recibos</div>
<div class="t" style="left:616.46px;top:544.59px;font-size:11px;color:#000;font-weight:bold;transform:scaleX(1.0200);">5</div>
<div class="t" style="left:461.40px;top:562.29px;font-size:11px;color:#000;transform:scaleX(0.9850);">Cant. Débitos</div>
<div class="t" style="left:616.46px;top:562.29px;font-size:11px;color:#000;font-weight:bold;transform:scaleX(1.0200);">6</div>
<div class="t" style="left:461.40px;top:580.19px;font-size:11px;color:#000;transform:scaleX(0.9850);">Cant. Créditos</div>
<div class="t" style="left:616.46px;top:580.19px;font-size:11px;color:#000;font-weight:bold;transform:scaleX(1.0200);">4</div>
<div class="t" style="left:461.40px;top:604.29px;font-size:11px;color:#000;transform:scaleX(0.9850);">Cant. de Comp.</div>
<div class="t" style="left:610.22px;top:604.29px;font-size:11px;color:#000;font-weight:bold;transform:scaleX(1.0200);">28</div>
<div class="a" style="left:452px;top:597px;width:185px;height:1.5px;background:#b4b4b4;"></div>
<div class="a" style="left:638px;top:522px;width:1.5px;height:96px;background:#b4b4b4;"></div>
<div class="t" style="left:647.60px;top:528.39px;font-size:11px;color:#000;transform:scaleX(0.9462);">Deuda Vencida</div>
<div class="t" style="left:647.60px;top:544.59px;font-size:11px;color:#000;transform:scaleX(0.9500);">Deuda a Vencer</div>
<div class="t" style="left:767.00px;top:527.39px;font-size:11px;color:#000;font-weight:bold;transform:scaleX(1.0990);">226.043,51</div>
<div class="t" style="left:761.50px;top:543.09px;font-size:11px;color:#000;font-weight:bold;transform:scaleX(1.1241);">-186.870,25</div>
<div class="a" style="left:838.5px;top:522px;width:1.5px;height:38px;background:#b4b4b4;"></div>
<div class="t" style="left:850.30px;top:527.39px;font-size:11px;color:#000;transform:scaleX(0.9800);">Total Débitos</div>
<div class="t" style="left:850.30px;top:543.09px;font-size:11px;color:#000;transform:scaleX(0.9800);">Total Créditos</div>
<div class="t" style="left:989.70px;top:527.39px;font-size:11px;color:#000;font-weight:bold;transform:scaleX(1.1262);">226.043,51</div>
<div class="t" style="left:985.70px;top:543.09px;font-size:11px;color:#000;font-weight:bold;transform:scaleX(1.1241);">-186.870,25</div>
<div class="a" style="left:640px;top:561.5px;width:446px;height:1.5px;background:#c8c8c8;"></div>
<div class="t" style="left:831.00px;top:573.09px;font-size:11px;color:#000;font-weight:bold;transform:scaleX(1.0572);">Saldo Actual</div>
<div class="t" style="left:825.10px;top:586.39px;font-size:17.5px;color:#f00000;font-weight:bold;font-family:'Liberation Serif',serif;transform:scaleX(1.1300);">39.173,26</div>
<div class="a" style="left:450px;top:620px;width:636px;height:1px;background:#b8b8b8;"></div>
<div class="a" style="left:450px;top:621px;width:636px;height:1px;background:#fff;"></div>
<div class="a" style="left:1086px;top:198px;width:1px;height:423px;background:#fff;"></div>
<div class="t" style="left:487.30px;top:626.69px;font-size:11px;color:#000;transform:scaleX(1.0662);">Ult. Mod.: --/--/----</div>
<div class="a" style="left:618.5px;top:624px;width:1px;height:15px;background:#c8c8c8;"></div>
<div class="t" style="left:671.80px;top:626.69px;font-size:11px;color:#000;transform:scaleX(0.9571);">Usuario:</div>
<div class="a" style="left:768.5px;top:624px;width:1px;height:15px;background:#c8c8c8;"></div>
<div class="t" style="left:772.90px;top:626.69px;font-size:11px;color:#000;">CC833</div>
<div class="a" style="left:868.5px;top:624px;width:1px;height:15px;background:#c8c8c8;"></div>
<div class="a" style="left:1084.5px;top:631px;width:2px;height:2px;background:#b4b4b4;"></div>
<div class="a" style="left:1081.0px;top:634px;width:2px;height:2px;background:#b4b4b4;"></div>
<div class="a" style="left:1084.5px;top:634px;width:2px;height:2px;background:#b4b4b4;"></div>
<div class="a" style="left:1077.5px;top:637px;width:2px;height:2px;background:#b4b4b4;"></div>
<div class="a" style="left:1081.0px;top:637px;width:2px;height:2px;background:#b4b4b4;"></div>
<div class="a" style="left:1084.5px;top:637px;width:2px;height:2px;background:#b4b4b4;"></div>
</body></html>
